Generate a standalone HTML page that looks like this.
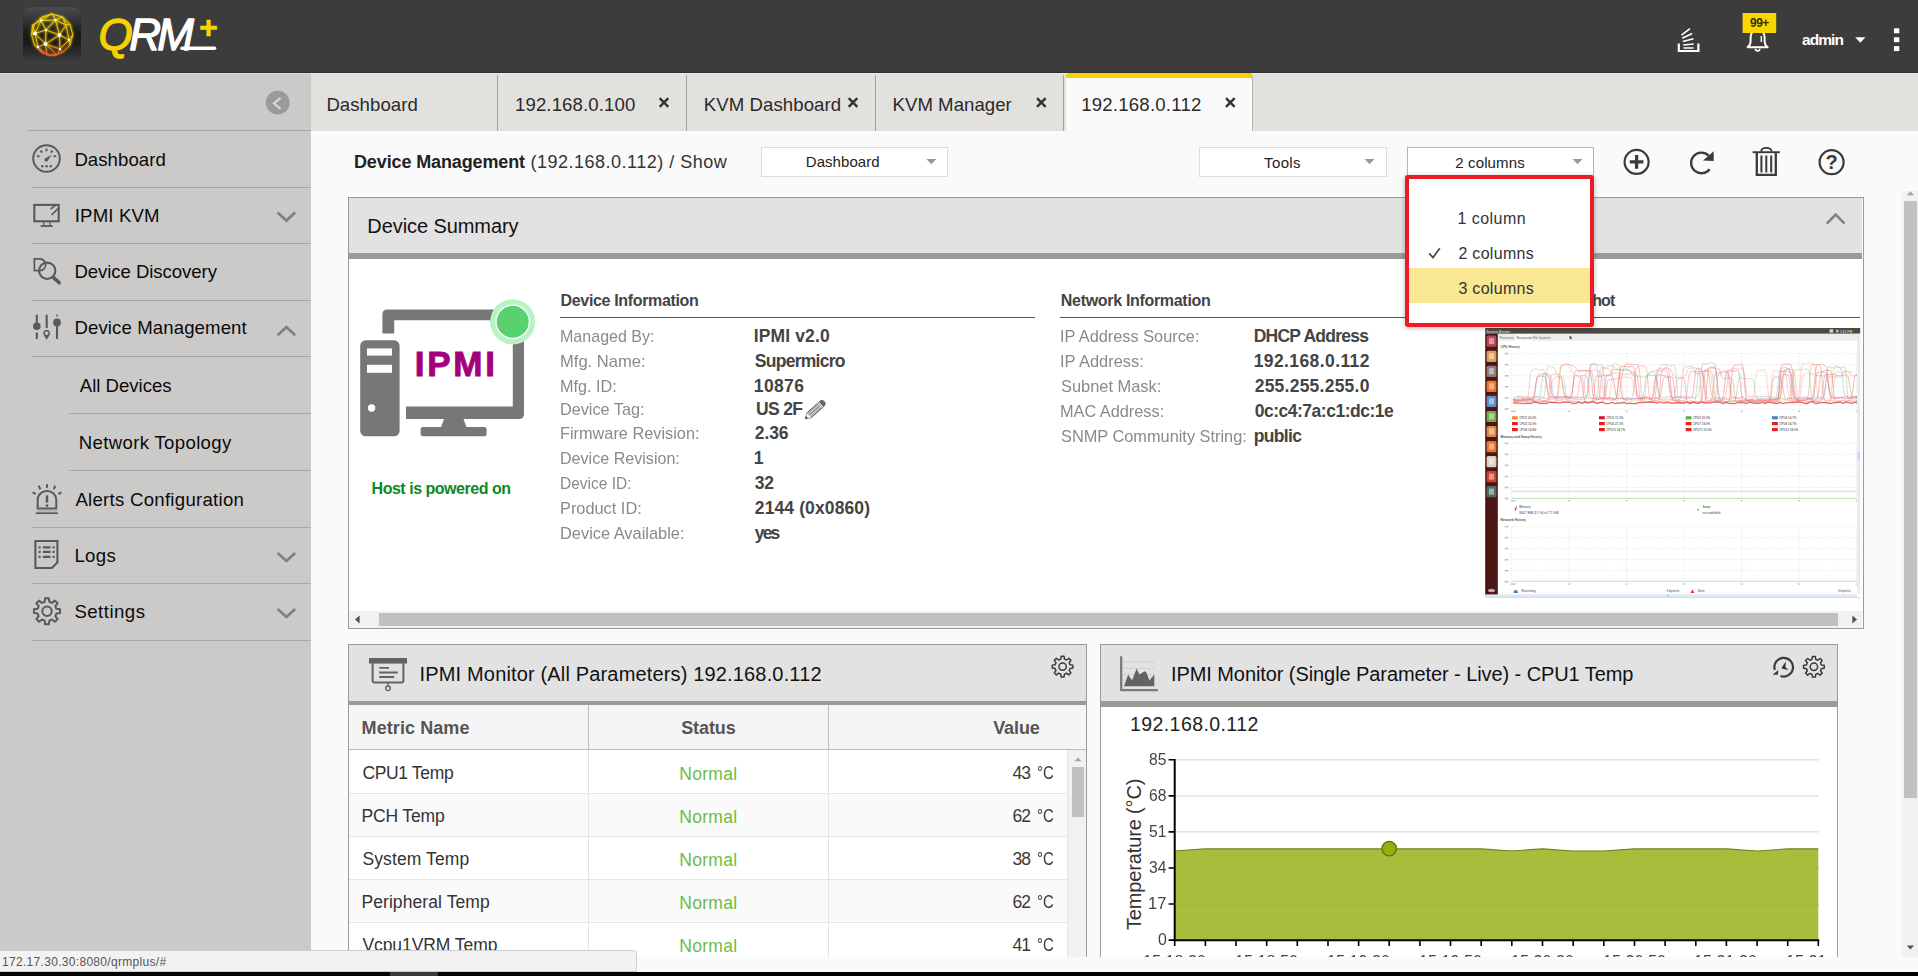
<!DOCTYPE html><html lang="en"><head><meta charset="utf-8"><title>QRM+</title><style>
*{box-sizing:border-box;margin:0;padding:0}
html,body{width:1918px;height:976px;overflow:hidden;background:#fafafa;font-family:"Liberation Sans",sans-serif;color:#111}
.a{position:absolute}
.t{position:absolute;white-space:nowrap;line-height:1}
#hdr{left:0;top:0;width:1918px;height:73px;background:#3c3c3c;border-bottom:1px solid #313131}
#side{left:0;top:73px;width:311px;height:884px;background:#cccac8;border-top:1px solid #d9d8d6}
#tabs{left:311px;top:73px;width:1607px;height:58px;background:#e3e1de;border-top:1px solid #ecebe8}
.sl{position:absolute;height:1px;background:#a9a7a5}
.tsep{position:absolute;top:75px;width:1px;height:56px;background:#a5a3a0}
#tabact{left:1066px;top:73px;width:187px;height:58px;background:#fafafa;border-top:5px solid #f7d100;border-radius:4px 4px 0 0;border-right:1px solid #b5b3b0}
.sel{position:absolute;height:30px;background:#fff;border:1px solid #dcdcdc}
.panel{position:absolute;border:1px solid #9a9a98;background:#fff}
.ph{position:absolute;left:1px;top:1px;right:1px;background:#e2e2e2}
.band{position:absolute;left:0;right:0;background:#9b9a96}
</style></head><body>
<div id="hdr" class="a"></div>
<svg class="a" style="left:0;top:0" width="1918" height="72" viewBox="0 0 1918 72"><defs><linearGradient id="gi" x1="0" y1="0" x2="0" y2="1"><stop offset="0" stop-color="#4b4c4e"/><stop offset="0.45" stop-color="#1c1c1c"/><stop offset="0.62" stop-color="#1a1a1a"/><stop offset="1" stop-color="#3d3f41"/></linearGradient><linearGradient id="gy" x1="0" y1="13" x2="0" y2="56" gradientUnits="userSpaceOnUse"><stop offset="0" stop-color="#ffe100"/><stop offset="0.7" stop-color="#f5c400"/><stop offset="0.88" stop-color="#f08020"/><stop offset="1" stop-color="#ee5a24"/></linearGradient><filter id="gl" x="-20%" y="-20%" width="140%" height="140%"><feGaussianBlur stdDeviation="0.9"/></filter></defs><rect x="23" y="7" width="58" height="57" rx="9" fill="url(#gi)"/><path d="M52.2 14.2 L62.5 17.0 L70.0 24.5 L72.8 34.8 L70.0 45.1 L62.5 52.6 L52.2 55.4 L41.9 52.6 L34.4 45.1 L31.6 34.8 L34.4 24.5 L41.9 17.0 Z M41 20.5 L55.5 20 M41 20.5 L46 30 M55.5 20 L46 30 M41 20.5 L35 33.5 M46 30 L35 33.5 M55.5 20 L59.5 35 M46 30 L59.5 35 M59.5 35 L69 40 M46 30 L45.5 44 M35 33.5 L45.5 44 M59.5 35 L45.5 44 M59.5 35 L60 49 M45.5 44 L60 49 M69 40 L60 49 M35 33.5 L38 47 M45.5 44 L38 47 M52 13.5 L41 20.5 M52 13.5 L55.5 20 M66 25 L55.5 20 M66 25 L59.5 35 M66 25 L69 40 M32.5 25 L41 20.5 M32.5 25 L35 33.5 M45.5 44 L47 55 M38 47 L47 55 M60 49 L57 55 M45.5 44 L57 55 M47 55 L57 55 M52 13.5 L52.2 14.2 M66 25 L70.0 24.5 M69 40 L70.0 45.1 M60 49 L62.5 52.6 M57 55 L52.2 55.4 M47 55 L52.2 55.4 M38 47 L34.4 45.1 M35 33.5 L31.6 34.8 M32.5 25 L34.4 24.5 M41 20.5 L41.9 17.0 M55.5 20 L62.5 17.0 M66 25 L62.5 17.0 M69 40 L72.8 34.8 M38 47 L41.9 52.6 M32.5 25 L31.6 34.8" fill="none" stroke="url(#gy)" stroke-width="2.2" opacity="0.55" filter="url(#gl)"/><path d="M52.2 14.2 L62.5 17.0 L70.0 24.5 L72.8 34.8 L70.0 45.1 L62.5 52.6 L52.2 55.4 L41.9 52.6 L34.4 45.1 L31.6 34.8 L34.4 24.5 L41.9 17.0 Z M41 20.5 L55.5 20 M41 20.5 L46 30 M55.5 20 L46 30 M41 20.5 L35 33.5 M46 30 L35 33.5 M55.5 20 L59.5 35 M46 30 L59.5 35 M59.5 35 L69 40 M46 30 L45.5 44 M35 33.5 L45.5 44 M59.5 35 L45.5 44 M59.5 35 L60 49 M45.5 44 L60 49 M69 40 L60 49 M35 33.5 L38 47 M45.5 44 L38 47 M52 13.5 L41 20.5 M52 13.5 L55.5 20 M66 25 L55.5 20 M66 25 L59.5 35 M66 25 L69 40 M32.5 25 L41 20.5 M32.5 25 L35 33.5 M45.5 44 L47 55 M38 47 L47 55 M60 49 L57 55 M45.5 44 L57 55 M47 55 L57 55 M52 13.5 L52.2 14.2 M66 25 L70.0 24.5 M69 40 L70.0 45.1 M60 49 L62.5 52.6 M57 55 L52.2 55.4 M47 55 L52.2 55.4 M38 47 L34.4 45.1 M35 33.5 L31.6 34.8 M32.5 25 L34.4 24.5 M41 20.5 L41.9 17.0 M55.5 20 L62.5 17.0 M66 25 L62.5 17.0 M69 40 L72.8 34.8 M38 47 L41.9 52.6 M32.5 25 L31.6 34.8" fill="none" stroke="url(#gy)" stroke-width="0.9"/><circle cx="41" cy="20.5" r="1.2" fill="#fff"/><circle cx="55.5" cy="20" r="1.2" fill="#fff"/><circle cx="46" cy="30" r="1.2" fill="#fff"/><circle cx="35" cy="33.5" r="2.0" fill="#fff"/><circle cx="59.5" cy="35" r="2.0" fill="#fff"/><circle cx="69" cy="40" r="1.2" fill="#fff"/><circle cx="45.5" cy="44" r="2.0" fill="#fff"/><circle cx="60" cy="49" r="1.2" fill="#fff"/><circle cx="38" cy="47" r="1.2" fill="#fff"/><text x="98.5" y="49.6" font-family="Liberation Sans, sans-serif" font-style="italic" font-size="44" letter-spacing="-3.6" fill="#f7d100" stroke="#f7d100" stroke-width="1.3" stroke-linejoin="round">Q<tspan fill="#fff" stroke="#fff">RM</tspan></text><text x="198.6" y="37.6" font-family="Liberation Sans, sans-serif" font-weight="700" font-style="italic" font-size="32" fill="#f7d100" stroke="#f7d100" stroke-width="0.6" stroke-linejoin="round">+</text><path d="M182 48.3 H214.5" stroke="#fff" stroke-width="3.6" stroke-linecap="round"/><g stroke="#fff" fill="none" stroke-width="1.6"><path d="M1678.8 43.5 V51 H1698.4 V43.5" stroke-width="2.2"/><path d="M1683.5 48 H1693.5 M1683.3 45 L1693.7 44 M1682.8 41.6 L1693.5 38.8 M1682.3 38.2 L1692.2 33.6 M1681.5 35.2 L1690 28.6"/></g><path d="M1747.6 47.2 H1767.6 C1765.2 45.6 1764.6 43.6 1764.6 40.5 V37.5 C1764.6 32.8 1761.6 30 1757.6 30 C1753.6 30 1750.6 32.8 1750.6 37.5 V40.5 C1750.6 43.6 1750 45.6 1747.6 47.2 Z" fill="none" stroke="#fff" stroke-width="2" stroke-linejoin="round"/><path d="M1755.4 48.8 a2.2 2.2 0 0 0 4.4 0" fill="none" stroke="#fff" stroke-width="1.6"/><path d="M1761.3 36 V42" stroke="#fff" stroke-width="1.4"/><rect x="1742.6" y="13" width="33.6" height="20" fill="#f9d600"/><path d="M1855.2 37.2 H1865.4 L1860.3 42.8 Z" fill="#fff"/><rect x="1893.9" y="28.3" width="5.4" height="5" fill="#fff"/><rect x="1893.9" y="37.2" width="5.4" height="5" fill="#fff"/><rect x="1893.9" y="46.1" width="5.4" height="5" fill="#fff"/></svg>
<div id="side" class="a"></div>
<div id="tabs" class="a"></div>
<div class="sl" style="left:27px;top:130px;width:284px"></div>
<div class="sl" style="left:32px;top:187px;width:279px"></div>
<div class="sl" style="left:32px;top:243px;width:279px"></div>
<div class="sl" style="left:32px;top:300px;width:279px"></div>
<div class="sl" style="left:32px;top:356px;width:279px"></div>
<div class="sl" style="left:69px;top:413px;width:242px"></div>
<div class="sl" style="left:69px;top:470px;width:242px"></div>
<div class="sl" style="left:32px;top:527px;width:279px"></div>
<div class="sl" style="left:32px;top:583px;width:279px"></div>
<div class="sl" style="left:32px;top:640px;width:279px"></div>
<svg class="a" style="left:0;top:72px" width="311" height="600" viewBox="0 72 311 600"><circle cx="277.7" cy="102.7" r="11.9" fill="#9b9a98"/><path d="M280.5 98 L273.9 103.3 L280.5 108.8" fill="none" stroke="#d8d7d5" stroke-width="2.3"/><g fill="none" stroke="#5b5957" stroke-width="2"><circle cx="46.5" cy="158.5" r="13.3"/><path d="M39.5 156.6 L36.9 155.9 M42.2 152.7 L40.5 150.6 M46.5 151.3 L46.5 148.6 M50.8 152.7 L52.5 150.6 M53.5 156.6 L56.1 155.9" stroke-width="1.9"/></g><path d="M44.9 158.7 L51.9 154.6 L47.3 161.2 Z" fill="#5b5957"/><circle cx="46.1" cy="159.9" r="1.7" fill="#5b5957"/><circle cx="42.3" cy="166.3" r="1.25" fill="#5b5957"/><circle cx="46.5" cy="166.3" r="1.25" fill="#5b5957"/><circle cx="50.7" cy="166.3" r="1.25" fill="#5b5957"/><g fill="none" stroke="#5b5957" stroke-width="2.1"><rect x="34.3" y="204.9" width="24.4" height="16.4"/><path d="M50.6 209.2 L56.2 204.6 M51.6 215 L58.6 208" stroke-width="1.7"/><path d="M43.7 221.6 V225.6 M49.8 221.6 V225.6" stroke-width="1.3"/><path d="M40.7 226 H52.7" stroke-width="1.8"/></g><g fill="none" stroke="#5b5957" stroke-width="2.1"><path d="M34.4 258.9 H39.6 C43.9 258.9 45.7 262.1 45.7 264.6 C45.7 267.9 43.4 270.6 39.6 270.6 H34.4 Z" stroke-width="1.7"/><circle cx="47.2" cy="270.8" r="8.2"/><path d="M53.6 277.6 L59.2 282.8" stroke-width="3.5" stroke-linecap="round"/></g><g stroke="#5b5957" stroke-width="2.1" fill="none"><path d="M36.8 314.8 V327 M36.8 332.6 V339 M46.7 314.8 V328 M57 325 V339"/><path d="M46.7 330.6 a2.6 2.6 0 1 1 -0.01 0 Z M44.9 335.4 L46.7 338.2 L48.5 335.4" stroke-width="1.6"/></g><circle cx="36.8" cy="326.2" r="3.8" fill="#5b5957"/><circle cx="57" cy="322.4" r="3.9" fill="#5b5957"/><circle cx="57" cy="315.4" r="1" fill="#5b5957"/><g fill="none" stroke="#5b5957" stroke-width="2"><path d="M37.7 508.6 V499.9 C37.7 494.6 41.7 490.9 47 490.9 C52.3 490.9 56.3 494.6 56.3 499.9 V508.6 Z"/><path d="M35.8 513.2 H58" stroke-width="1.7"/><path d="M37 510.9 H57" stroke="#a9a7a4" stroke-width="1.2"/><path d="M47 495.3 V502.6" stroke-width="2.4"/><path d="M47 484.3 V487.8 M38.6 485.8 L40.4 489.2 M55.4 485.8 L53.6 489.2 M32.6 492.4 L35.6 494 M61.4 492.4 L58.4 494" stroke-width="2"/></g><circle cx="47" cy="505.6" r="1.35" fill="#5b5957"/><g fill="none" stroke="#5b5957" stroke-width="2.1"><path d="M35.4 541 H57.4 V562.4 L52 568 H35.4 Z"/><path d="M38.6 547.3 H40.6 M42.9 547.3 H50.5 M52.6 547.3 H54.6 M38.6 551.9 H40.6 M42.9 551.9 H50.5 M52.6 551.9 H54.6 M38.6 556.8 H40.6 M42.9 556.8 H50.5 M52.6 556.8 H54.6" stroke-width="2.3"/></g><path d="M56.41 608.86 L60.07 609.34 L60.07 613.06 L56.41 613.54 L55.31 616.20 L57.56 619.13 L54.93 621.76 L52.00 619.51 L49.34 620.61 L48.86 624.27 L45.14 624.27 L44.66 620.61 L42.00 619.51 L39.07 621.76 L36.44 619.13 L38.69 616.20 L37.59 613.54 L33.93 613.06 L33.93 609.34 L37.59 608.86 L38.69 606.20 L36.44 603.27 L39.07 600.64 L42.00 602.89 L44.66 601.79 L45.14 598.13 L48.86 598.13 L49.34 601.79 L52.00 602.89 L54.93 600.64 L57.56 603.27 L55.31 606.20 Z" fill="none" stroke="#5b5957" stroke-width="2.0" stroke-linejoin="round"/><circle cx="47" cy="611.2" r="4.7" fill="none" stroke="#5b5957" stroke-width="2.0"/><path d="M277.6 212.6 L286.4 220.6 L295.2 212.6" fill="none" stroke="#827e7b" stroke-width="2.7" stroke-linecap="butt" stroke-linejoin="miter"/><path d="M277.6 335.2 L286.4 327 L295.2 335.2" fill="none" stroke="#827e7b" stroke-width="2.7" stroke-linecap="butt" stroke-linejoin="miter"/><path d="M277.6 553 L286.4 561 L295.2 553" fill="none" stroke="#827e7b" stroke-width="2.7" stroke-linecap="butt" stroke-linejoin="miter"/><path d="M277.6 609 L286.4 617 L295.2 609" fill="none" stroke="#827e7b" stroke-width="2.7" stroke-linecap="butt" stroke-linejoin="miter"/></svg>
<div class="tsep" style="left:497px"></div>
<div class="tsep" style="left:686px"></div>
<div class="tsep" style="left:875px"></div>
<div class="tsep" style="left:1063px"></div>
<div id="tabact" class="a"></div>
<svg class="a" style="left:640px;top:90px" width="620" height="26" viewBox="640 90 620 26"><path d="M659.7 98.2 L668.3 106.8 M668.3 98.2 L659.7 106.8" stroke="#333" stroke-width="2.4" fill="none"/><path d="M848.7 98.2 L857.3 106.8 M857.3 98.2 L848.7 106.8" stroke="#333" stroke-width="2.4" fill="none"/><path d="M1037.0 98.2 L1045.6 106.8 M1045.6 98.2 L1037.0 106.8" stroke="#333" stroke-width="2.4" fill="none"/><path d="M1226.0 98.2 L1234.6 106.8 M1234.6 98.2 L1226.0 106.8" stroke="#333" stroke-width="2.4" fill="none"/></svg>
<div class="sel" style="left:761px;top:147px;width:187px"></div>
<div class="sel" style="left:1199px;top:147px;width:188px"></div>
<div class="sel" style="left:1407px;top:147px;width:187px;border-color:#b4b4b4"></div>
<svg class="a" style="left:740px;top:140px" width="1130" height="50" viewBox="740 140 1130 50"><path d="M926.3 158.9 H936.3 L931.3 164.29999999999998 Z" fill="#9a9a9a"/><path d="M1364.5 158.9 H1374.5 L1369.5 164.29999999999998 Z" fill="#9a9a9a"/><path d="M1572.5 158.9 H1582.5 L1577.5 164.29999999999998 Z" fill="#9a9a9a"/><circle cx="1636.6" cy="161.9" r="12" fill="none" stroke="#3a3a38" stroke-width="2.2"/><path d="M1629.8 161.9 H1643.4 M1636.6 155.1 V168.7" stroke="#3a3a38" stroke-width="3.3"/><path d="M1709.6 169.2 A10.3 10.3 0 1 1 1708.6 155.6" fill="none" stroke="#3a3a38" stroke-width="2.3"/><path d="M1703 160.6 L1713.7 151.3 V161 Z" fill="#3a3a38"/><g fill="none" stroke="#3a3a38"><path d="M1752.6 152.2 H1779.8" stroke-width="1.9"/><path d="M1761 151.6 C1761.4 146.6 1771.2 146.6 1771.6 151.6" stroke-width="1.7"/><path d="M1756.8 152.6 V174.9 H1775.8 V152.6" stroke-width="2.3"/><path d="M1761.4 155.5 V172.5 M1766.3 155.5 V172.5 M1771.2 155.5 V172.5" stroke-width="2"/></g><circle cx="1831.6" cy="162.2" r="12" fill="none" stroke="#3a3a38" stroke-width="2.2"/><text x="1831.6" y="169" text-anchor="middle" font-family="Liberation Sans, sans-serif" font-weight="700" font-size="20" fill="#3a3a38">?</text></svg>
<div class="a" style="left:311px;top:131px;width:1607px;height:826px;overflow:hidden"><div class="a" style="left:-311px;top:-131px;width:1918px;height:976px">
<div class="panel" style="left:348px;top:197px;width:1516px;height:432px"><div class="ph" style="height:55px;top:0;left:0"></div><div class="band" style="top:55px;height:6px;left:0;right:1px"></div><div class="a" style="left:0;right:1px;bottom:0;height:17px;background:#f1f1f1"></div><div class="a" style="left:30px;bottom:2px;height:13px;width:1459px;background:#c1c1c1"></div></div>
<div class="a" style="left:560px;top:317px;width:475px;height:1px;background:#555"></div>
<div class="a" style="left:1060px;top:317px;width:400px;height:1px;background:#555"></div>
<div class="a" style="left:1485px;top:317px;width:375px;height:1px;background:#555"></div>
<svg class="a" style="left:348px;top:197px" width="1516" height="432" viewBox="348 197 1516 432"><path d="M1826.8 223.6 L1835.6999999999998 214.6 L1844.6 223.6" fill="none" stroke="#85817e" stroke-width="2.6" stroke-linecap="butt" stroke-linejoin="miter"/><path d="M359.6 615.5 V623.5 L355.0 619.5 Z" fill="#505050"/><path d="M1852.4 615.5 V623.5 L1857.0 619.5 Z" fill="#505050"/><path d="M382.4 333.5 V314.5 Q382.4 309.5 387.4 309.5 H519 Q524 309.5 524 314.5 V414 Q524 419 519 419 H406 V406.6 H512.8 V320.2 H394.2 V333.5 Z" fill="#777"/><path d="M444 419 H463.5 L466.5 427.3 H441 Z" fill="#777"/><rect x="420.6" y="427" width="66" height="9.2" rx="2.5" fill="#777"/><rect x="360.2" y="340.3" width="39.4" height="96" rx="5.5" fill="#777"/><rect x="367" y="348.4" width="25" height="7.2" fill="#fff"/><rect x="367" y="364.8" width="25" height="8" fill="#fff"/><circle cx="371.6" cy="408" r="3.7" fill="#fff"/><circle cx="512.7" cy="321.8" r="22.6" fill="#b9f3c4"/><circle cx="512.7" cy="321.8" r="17.4" fill="#fff"/><circle cx="512.7" cy="321.8" r="16" fill="#58d16e"/><g transform="translate(805.2,418.8) rotate(-42)"><path d="M0 0 L5.4 -3.3 H22.4 Q25.8 -3.3 25.8 0 Q25.8 3.3 22.4 3.3 H5.4 Z" fill="#a6a6a6" stroke="#6a6a6a" stroke-width="0.9" stroke-linejoin="round"/><path d="M5.4 -3.1 L2.2 -1.3 L2.2 1.3 L5.4 3.1 Z" fill="#f4f4f4"/><path d="M0 0 L2.4 -1.4 V1.4 Z" fill="#555"/><path d="M5.6 -1.1 H19 M5.6 1.1 H19" stroke="#e2e2e2" stroke-width="0.8"/><path d="M5.6 0 H19" stroke="#777" stroke-width="0.7"/><path d="M19.6 -3.2 V3.2 M21 -3.2 V3.2" stroke="#f0f0f0" stroke-width="0.7"/><path d="M21.8 -3.1 H22.6 Q25.4 -3 25.4 0 Q25.4 3 22.6 3.1 H21.8 Z" fill="#676767"/></g></svg>
<svg class="a" style="left:1485px;top:327px" width="377" height="272" viewBox="1485 327 377 272"><rect x="1485.2" y="328" width="375.0" height="269.79999999999995" fill="#fff"/><rect x="1485.2" y="328" width="375.0" height="5.8" fill="#4b4a45"/><rect x="1497.8" y="333.8" width="362.4000000000001" height="7" fill="#efedeb"/><rect x="1485.2" y="333.8" width="12.6" height="261.99999999999994" fill="#4a1512"/><rect x="1486.6" y="335.6" width="9.8" height="11.2" rx="1.5" fill="#b5475a"/><rect x="1489" y="338.1" width="5" height="6" fill="#fff" opacity="0.45"/><rect x="1486.6" y="350.7" width="9.8" height="11.2" rx="1.5" fill="#d9a05a"/><rect x="1489" y="353.2" width="5" height="6" fill="#fff" opacity="0.45"/><rect x="1486.6" y="365.7" width="9.8" height="11.2" rx="1.5" fill="#8a7f78"/><rect x="1489" y="368.2" width="5" height="6" fill="#fff" opacity="0.45"/><rect x="1486.6" y="380.8" width="9.8" height="11.2" rx="1.5" fill="#e8792a"/><rect x="1489" y="383.2" width="5" height="6" fill="#fff" opacity="0.45"/><rect x="1486.6" y="395.8" width="9.8" height="11.2" rx="1.5" fill="#5b8fc7"/><rect x="1489" y="398.3" width="5" height="6" fill="#fff" opacity="0.45"/><rect x="1486.6" y="410.9" width="9.8" height="11.2" rx="1.5" fill="#6fb04e"/><rect x="1489" y="413.4" width="5" height="6" fill="#fff" opacity="0.45"/><rect x="1486.6" y="425.9" width="9.8" height="11.2" rx="1.5" fill="#d98a4a"/><rect x="1489" y="428.4" width="5" height="6" fill="#fff" opacity="0.45"/><rect x="1486.6" y="441.0" width="9.8" height="11.2" rx="1.5" fill="#e8762a"/><rect x="1489" y="443.5" width="5" height="6" fill="#fff" opacity="0.45"/><rect x="1486.6" y="456.0" width="9.8" height="11.2" rx="1.5" fill="#d9d2c4"/><rect x="1489" y="458.5" width="5" height="6" fill="#fff" opacity="0.45"/><rect x="1486.6" y="471.1" width="9.8" height="11.2" rx="1.5" fill="#c9452f"/><rect x="1489" y="473.6" width="5" height="6" fill="#fff" opacity="0.45"/><rect x="1486.6" y="486.1" width="9.8" height="11.2" rx="1.5" fill="#4d6e68"/><rect x="1489" y="488.6" width="5" height="6" fill="#fff" opacity="0.45"/><ellipse cx="1491.5" cy="590.5" rx="3.6" ry="1.7" fill="#b9a9a6"/><text x="1486.4" y="332.6" font-family="Liberation Sans, sans-serif" font-size="3.2" font-weight="700" fill="#cfcac0">System Monitor</text><text x="1840" y="332.6" font-family="Liberation Sans, sans-serif" font-size="3.2" font-weight="700" fill="#cfcac0">1:21 PM</text><rect x="1829.5" y="329.3" width="3.6" height="3.4" fill="#d8d4cc"/><rect x="1836" y="329.8" width="2.6" height="2.6" fill="#bdb9b0"/><text x="1499.5" y="339.2" font-family="Liberation Sans, sans-serif" font-size="3.1" font-weight="400" fill="#666">Processes</text><text x="1516.5" y="339.2" font-family="Liberation Sans, sans-serif" font-size="3.1" font-weight="400" fill="#444">Resources</text><text x="1533" y="339.2" font-family="Liberation Sans, sans-serif" font-size="3.1" font-weight="400" fill="#666">File Systems</text><rect x="1514.6" y="334.4" width="16" height="6.4" fill="#fafafa"/><text x="1516.5" y="339.2" font-family="Liberation Sans, sans-serif" font-size="3.1" font-weight="400" fill="#444">Resources</text><path d="M1569.6 335.6 l0 3.4 l0.9 -0.8 l0.7 1.5 l0.6 -0.3 l-0.7 -1.4 l1.1 0 z" fill="#333"/><text x="1500.5" y="348" font-family="Liberation Sans, sans-serif" font-size="3.3" font-weight="700" fill="#555">CPU History</text><text x="1500.5" y="438" font-family="Liberation Sans, sans-serif" font-size="3.3" font-weight="700" fill="#555">Memory and Swap History</text><text x="1500.5" y="521.4" font-family="Liberation Sans, sans-serif" font-size="3.3" font-weight="700" fill="#555">Network History</text><path d="M1511.6 353.6 H1856.5 M1511.6 364.7 H1856.5 M1511.6 375.8 H1856.5 M1511.6 386.8 H1856.5 M1511.6 397.9 H1856.5 M1511.6 409.0 H1856.5 M1511.6 353.6 V409 M1569.1 353.6 V409 M1626.6 353.6 V409 M1684.1 353.6 V409 M1741.6 353.6 V409 M1799.1 353.6 V409 M1856.6 353.6 V409" stroke="#d9d9d9" stroke-width="0.5" stroke-dasharray="1 0.8" fill="none"/><path d="M1511.6 443.4 H1856.5 M1511.6 454.4 H1856.5 M1511.6 465.4 H1856.5 M1511.6 476.5 H1856.5 M1511.6 487.5 H1856.5 M1511.6 498.5 H1856.5 M1511.6 443.4 V498.5 M1569.1 443.4 V498.5 M1626.6 443.4 V498.5 M1684.1 443.4 V498.5 M1741.6 443.4 V498.5 M1799.1 443.4 V498.5 M1856.6 443.4 V498.5" stroke="#d9d9d9" stroke-width="0.5" stroke-dasharray="1 0.8" fill="none"/><path d="M1511.6 526.6 H1856.5 M1511.6 537.6 H1856.5 M1511.6 548.6 H1856.5 M1511.6 559.7 H1856.5 M1511.6 570.7 H1856.5 M1511.6 581.7 H1856.5 M1511.6 526.6 V581.7 M1569.1 526.6 V581.7 M1626.6 526.6 V581.7 M1684.1 526.6 V581.7 M1741.6 526.6 V581.7 M1799.1 526.6 V581.7 M1856.6 526.6 V581.7" stroke="#d9d9d9" stroke-width="0.5" stroke-dasharray="1 0.8" fill="none"/><rect x="1504.6" y="352.8" width="4" height="1.6" fill="#c4c4c4"/><rect x="1504.6" y="363.9" width="4" height="1.6" fill="#c4c4c4"/><rect x="1504.6" y="375.0" width="4" height="1.6" fill="#c4c4c4"/><rect x="1504.6" y="386.0" width="4" height="1.6" fill="#c4c4c4"/><rect x="1504.6" y="397.1" width="4" height="1.6" fill="#c4c4c4"/><rect x="1504.6" y="408.2" width="4" height="1.6" fill="#c4c4c4"/><rect x="1510.6" y="410.6" width="5" height="1.5" fill="#c9c9c9"/><rect x="1568.1" y="410.6" width="2" height="1.5" fill="#c9c9c9"/><rect x="1625.6" y="410.6" width="2" height="1.5" fill="#c9c9c9"/><rect x="1683.1" y="410.6" width="2" height="1.5" fill="#c9c9c9"/><rect x="1740.6" y="410.6" width="2" height="1.5" fill="#c9c9c9"/><rect x="1798.1" y="410.6" width="2" height="1.5" fill="#c9c9c9"/><rect x="1855.6" y="410.6" width="2" height="1.5" fill="#c9c9c9"/><rect x="1504.6" y="442.6" width="4" height="1.6" fill="#c4c4c4"/><rect x="1504.6" y="453.6" width="4" height="1.6" fill="#c4c4c4"/><rect x="1504.6" y="464.6" width="4" height="1.6" fill="#c4c4c4"/><rect x="1504.6" y="475.7" width="4" height="1.6" fill="#c4c4c4"/><rect x="1504.6" y="486.7" width="4" height="1.6" fill="#c4c4c4"/><rect x="1504.6" y="497.7" width="4" height="1.6" fill="#c4c4c4"/><rect x="1510.6" y="500.1" width="5" height="1.5" fill="#c9c9c9"/><rect x="1568.1" y="500.1" width="2" height="1.5" fill="#c9c9c9"/><rect x="1625.6" y="500.1" width="2" height="1.5" fill="#c9c9c9"/><rect x="1683.1" y="500.1" width="2" height="1.5" fill="#c9c9c9"/><rect x="1740.6" y="500.1" width="2" height="1.5" fill="#c9c9c9"/><rect x="1798.1" y="500.1" width="2" height="1.5" fill="#c9c9c9"/><rect x="1855.6" y="500.1" width="2" height="1.5" fill="#c9c9c9"/><rect x="1504.6" y="525.8" width="4" height="1.6" fill="#c4c4c4"/><rect x="1504.6" y="536.8" width="4" height="1.6" fill="#c4c4c4"/><rect x="1504.6" y="547.8" width="4" height="1.6" fill="#c4c4c4"/><rect x="1504.6" y="558.9" width="4" height="1.6" fill="#c4c4c4"/><rect x="1504.6" y="569.9" width="4" height="1.6" fill="#c4c4c4"/><rect x="1504.6" y="580.9" width="4" height="1.6" fill="#c4c4c4"/><rect x="1510.6" y="583.3" width="5" height="1.5" fill="#c9c9c9"/><rect x="1568.1" y="583.3" width="2" height="1.5" fill="#c9c9c9"/><rect x="1625.6" y="583.3" width="2" height="1.5" fill="#c9c9c9"/><rect x="1683.1" y="583.3" width="2" height="1.5" fill="#c9c9c9"/><rect x="1740.6" y="583.3" width="2" height="1.5" fill="#c9c9c9"/><rect x="1798.1" y="583.3" width="2" height="1.5" fill="#c9c9c9"/><rect x="1855.6" y="583.3" width="2" height="1.5" fill="#c9c9c9"/><path d="M1513.0 399.6 C1516.7 399.6 1516.7 402.1 1520.4 402.1 C1522.0 402.1 1522.0 401.7 1523.6 401.7 C1525.2 401.7 1525.2 402.0 1526.8 402.0 C1528.4 402.0 1528.4 401.2 1530.0 401.2 C1531.6 401.2 1531.6 401.3 1533.3 401.3 C1534.9 401.3 1534.9 401.8 1536.5 401.8 C1538.1 401.8 1538.1 401.3 1539.7 401.3 C1541.3 401.3 1541.3 401.8 1542.9 401.8 C1544.5 401.8 1544.5 400.9 1546.1 400.9 C1547.7 400.9 1547.7 401.1 1549.3 401.1 C1550.9 401.1 1550.9 402.3 1552.5 402.3 C1554.1 402.3 1554.1 401.7 1555.7 401.7 C1558.5 401.7 1558.5 365.0 1561.3 365.0 C1563.0 365.0 1563.0 364.6 1564.8 364.6 C1566.6 364.6 1566.6 364.7 1568.3 364.7 C1571.3 364.7 1571.3 375.0 1574.3 375.0 C1576.1 375.0 1576.1 375.4 1577.9 375.4 C1579.6 375.4 1579.6 375.6 1581.4 375.6 C1584.2 375.6 1584.2 398.3 1587.0 398.3 C1588.8 398.3 1588.8 398.0 1590.6 398.0 C1592.4 398.0 1592.4 398.4 1594.2 398.4 C1596.0 398.4 1596.0 397.5 1597.8 397.5 C1599.6 397.5 1599.6 397.4 1601.4 397.4 C1603.2 397.4 1603.2 397.7 1605.0 397.7 C1606.8 397.7 1606.8 398.7 1608.6 398.7 C1611.3 398.7 1611.3 363.7 1614.0 363.7 C1616.0 363.7 1616.0 364.2 1618.0 364.2 C1621.4 364.2 1621.4 400.3 1624.8 400.3 C1626.6 400.3 1626.6 401.2 1628.4 401.2 C1630.2 401.2 1630.2 400.8 1632.1 400.8 C1633.9 400.8 1633.9 400.2 1635.7 400.2 C1637.5 400.2 1637.5 399.9 1639.3 399.9 C1641.2 399.9 1641.2 401.2 1643.0 401.2 C1646.1 401.2 1646.1 372.8 1649.2 372.8 C1651.5 372.8 1651.5 372.1 1653.9 372.1 C1657.7 372.1 1657.7 401.9 1661.5 401.9 C1663.2 401.9 1663.2 401.1 1664.9 401.1 C1666.7 401.1 1666.7 402.7 1668.4 402.7 C1670.1 402.7 1670.1 402.4 1671.8 402.4 C1673.5 402.4 1673.5 403.0 1675.2 403.0 C1677.0 403.0 1677.0 402.7 1678.7 402.7 C1680.4 402.7 1680.4 403.0 1682.1 403.0 C1683.8 403.0 1683.8 402.1 1685.5 402.1 C1687.3 402.1 1687.3 403.0 1689.0 403.0 C1690.7 403.0 1690.7 402.6 1692.4 402.6 C1694.1 402.6 1694.1 401.8 1695.8 401.8 C1697.6 401.8 1697.6 403.0 1699.3 403.0 C1702.1 403.0 1702.1 370.1 1704.8 370.1 C1706.8 370.1 1706.8 371.6 1708.7 371.6 C1712.1 371.6 1712.1 398.6 1715.5 398.6 C1717.2 398.6 1717.2 399.3 1718.8 399.3 C1720.5 399.3 1720.5 399.9 1722.2 399.9 C1723.8 399.9 1723.8 398.7 1725.5 398.7 C1728.3 398.7 1728.3 401.1 1731.0 401.1 C1732.8 401.1 1732.8 401.0 1734.5 401.0 C1736.2 401.0 1736.2 401.1 1737.9 401.1 C1739.7 401.1 1739.7 400.7 1741.4 400.7 C1743.1 400.7 1743.1 400.2 1744.9 400.2 C1746.6 400.2 1746.6 400.7 1748.3 400.7 C1750.1 400.7 1750.1 401.0 1751.8 401.0 C1754.8 401.0 1754.8 370.4 1757.7 370.4 C1759.4 370.4 1759.4 370.0 1761.1 370.0 C1762.7 370.0 1762.7 369.9 1764.4 369.9 C1767.4 369.9 1767.4 400.5 1770.5 400.5 C1772.1 400.5 1772.1 401.1 1773.8 401.1 C1775.5 401.1 1775.5 399.9 1777.2 399.9 C1778.8 399.9 1778.8 401.3 1780.5 401.3 C1782.2 401.3 1782.2 399.6 1783.9 399.6 C1785.6 399.6 1785.6 400.5 1787.2 400.5 C1788.9 400.5 1788.9 400.5 1790.6 400.5 C1792.3 400.5 1792.3 399.9 1793.9 399.9 C1795.6 399.9 1795.6 400.5 1797.3 400.5 C1800.1 400.5 1800.1 363.3 1802.9 363.3 C1804.7 363.3 1804.7 364.1 1806.5 364.1 C1808.2 364.1 1808.2 362.8 1810.0 362.8 C1811.8 362.8 1811.8 364.3 1813.6 364.3 C1816.3 364.3 1816.3 399.5 1819.0 399.5 C1820.9 399.5 1820.9 398.9 1822.9 398.9 C1824.8 398.9 1824.8 400.1 1826.8 400.1 C1828.7 400.1 1828.7 399.7 1830.6 399.7 C1833.9 399.7 1833.9 371.3 1837.1 371.3 C1839.2 371.3 1839.2 372.5 1841.3 372.5 C1843.4 372.5 1843.4 370.8 1845.5 370.8 C1849.0 370.8 1849.0 375.9 1852.5 375.9 C1854.5 375.9 1854.5 375.8 1856.5 375.8 C1856.5 375.8 1856.5 375.1 1856.5 375.1" fill="none" stroke="#eda65c" stroke-width="0.5" opacity="0.8"/><path d="M1513.0 399.5 C1514.2 399.5 1514.2 399.9 1515.4 399.9 C1517.2 399.9 1517.2 400.7 1518.9 400.7 C1520.6 400.7 1520.6 400.0 1522.4 400.0 C1524.1 400.0 1524.1 400.2 1525.9 400.2 C1527.6 400.2 1527.6 399.6 1529.4 399.6 C1531.1 399.6 1531.1 399.6 1532.9 399.6 C1535.5 399.6 1535.5 376.7 1538.1 376.7 C1539.7 376.7 1539.7 375.9 1541.3 375.9 C1542.9 375.9 1542.9 376.6 1544.5 376.6 C1547.0 376.6 1547.0 396.8 1549.5 396.8 C1551.2 396.8 1551.2 398.0 1552.9 398.0 C1554.6 398.0 1554.6 396.7 1556.4 396.7 C1558.1 396.7 1558.1 398.2 1559.8 398.2 C1561.5 398.2 1561.5 397.5 1563.3 397.5 C1565.0 397.5 1565.0 396.3 1566.7 396.3 C1568.4 396.3 1568.4 397.9 1570.2 397.9 C1572.9 397.9 1572.9 375.7 1575.6 375.7 C1577.7 375.7 1577.7 377.0 1579.8 377.0 C1583.0 377.0 1583.0 402.8 1586.2 402.8 C1587.8 402.8 1587.8 402.2 1589.5 402.2 C1591.1 402.2 1591.1 401.3 1592.7 401.3 C1594.3 401.3 1594.3 402.9 1595.9 402.9 C1597.5 402.9 1597.5 402.8 1599.1 402.8 C1600.8 402.8 1600.8 401.3 1602.4 401.3 C1604.8 401.3 1604.8 374.8 1607.2 374.8 C1609.3 374.8 1609.3 375.3 1611.4 375.3 C1614.7 375.3 1614.7 399.0 1618.0 399.0 C1619.7 399.0 1619.7 398.4 1621.3 398.4 C1623.0 398.4 1623.0 398.1 1624.6 398.1 C1626.3 398.1 1626.3 398.0 1627.9 398.0 C1629.6 398.0 1629.6 399.5 1631.2 399.5 C1632.9 399.5 1632.9 398.2 1634.5 398.2 C1636.2 398.2 1636.2 398.6 1637.8 398.6 C1639.5 398.6 1639.5 398.4 1641.1 398.4 C1642.8 398.4 1642.8 399.0 1644.4 399.0 C1646.1 399.0 1646.1 398.8 1647.7 398.8 C1649.4 398.8 1649.4 399.5 1651.0 399.5 C1653.8 399.5 1653.8 375.9 1656.5 375.9 C1658.2 375.9 1658.2 374.7 1659.9 374.7 C1661.6 374.7 1661.6 375.8 1663.3 375.8 C1665.0 375.8 1665.0 376.0 1666.7 376.0 C1669.8 376.0 1669.8 398.4 1673.0 398.4 C1674.9 398.4 1674.9 396.8 1676.7 396.8 C1678.6 396.8 1678.6 397.5 1680.4 397.5 C1682.2 397.5 1682.2 398.2 1684.1 398.2 C1685.9 398.2 1685.9 398.3 1687.8 398.3 C1689.6 398.3 1689.6 397.8 1691.5 397.8 C1694.3 397.8 1694.3 368.2 1697.1 368.2 C1699.0 368.2 1699.0 369.0 1700.9 369.0 C1704.0 369.0 1704.0 400.8 1707.1 400.8 C1708.9 400.8 1708.9 400.4 1710.7 400.4 C1712.4 400.4 1712.4 399.9 1714.2 399.9 C1716.0 399.9 1716.0 401.2 1717.8 401.2 C1719.6 401.2 1719.6 400.7 1721.4 400.7 C1724.6 400.7 1724.6 370.3 1727.9 370.3 C1729.6 370.3 1729.6 371.0 1731.2 371.0 C1732.9 371.0 1732.9 371.1 1734.5 371.1 C1736.2 371.1 1736.2 370.5 1737.8 370.5 C1740.6 370.5 1740.6 399.8 1743.3 399.8 C1745.0 399.8 1745.0 399.2 1746.7 399.2 C1748.4 399.2 1748.4 399.1 1750.0 399.1 C1751.7 399.1 1751.7 399.8 1753.4 399.8 C1755.1 399.8 1755.1 401.0 1756.7 401.0 C1758.4 401.0 1758.4 400.5 1760.1 400.5 C1761.8 400.5 1761.8 400.5 1763.5 400.5 C1765.1 400.5 1765.1 400.4 1766.8 400.4 C1768.5 400.4 1768.5 399.6 1770.2 399.6 C1771.8 399.6 1771.8 399.4 1773.5 399.4 C1775.2 399.4 1775.2 400.3 1776.9 400.3 C1779.4 400.3 1779.4 371.2 1781.9 371.2 C1783.9 371.2 1783.9 371.0 1786.0 371.0 C1788.0 371.0 1788.0 371.9 1790.0 371.9 C1792.9 371.9 1792.9 399.2 1795.9 399.2 C1797.5 399.2 1797.5 398.9 1799.2 398.9 C1800.8 398.9 1800.8 398.7 1802.5 398.7 C1804.2 398.7 1804.2 398.1 1805.8 398.1 C1807.5 398.1 1807.5 398.4 1809.1 398.4 C1810.8 398.4 1810.8 399.6 1812.4 399.6 C1815.1 399.6 1815.1 372.5 1817.7 372.5 C1819.7 372.5 1819.7 371.6 1821.7 371.6 C1823.7 371.6 1823.7 372.9 1825.7 372.9 C1828.5 372.9 1828.5 396.3 1831.3 396.3 C1833.1 396.3 1833.1 397.4 1834.8 397.4 C1836.6 397.4 1836.6 397.9 1838.4 397.9 C1840.1 397.9 1840.1 397.3 1841.9 397.3 C1843.7 397.3 1843.7 396.2 1845.4 396.2 C1847.2 396.2 1847.2 397.8 1848.9 397.8 C1850.7 397.8 1850.7 397.9 1852.5 397.9 C1854.2 397.9 1854.2 396.2 1856.0 396.2" fill="none" stroke="#d4486a" stroke-width="0.5" opacity="0.8"/><path d="M1513.0 400.0 C1513.3 400.0 1513.3 396.9 1513.7 396.9 C1515.3 396.9 1515.3 396.7 1517.0 396.7 C1518.6 396.7 1518.6 396.2 1520.3 396.2 C1521.9 396.2 1521.9 396.8 1523.6 396.8 C1525.2 396.8 1525.2 397.6 1526.9 397.6 C1528.5 397.6 1528.5 397.0 1530.2 397.0 C1531.8 397.0 1531.8 397.4 1533.5 397.4 C1535.1 397.4 1535.1 396.1 1536.8 396.1 C1538.4 396.1 1538.4 397.1 1540.1 397.1 C1541.7 397.1 1541.7 397.1 1543.4 397.1 C1545.9 397.1 1545.9 366.0 1548.4 366.0 C1550.6 366.0 1550.6 367.2 1552.8 367.2 C1555.9 367.2 1555.9 376.6 1558.9 376.6 C1560.7 376.6 1560.7 376.2 1562.4 376.2 C1565.4 376.2 1565.4 402.2 1568.3 402.2 C1570.0 402.2 1570.0 401.3 1571.7 401.3 C1573.4 401.3 1573.4 401.7 1575.1 401.7 C1576.8 401.7 1576.8 401.6 1578.5 401.6 C1580.2 401.6 1580.2 402.4 1581.8 402.4 C1583.5 402.4 1583.5 401.4 1585.2 401.4 C1586.9 401.4 1586.9 402.3 1588.6 402.3 C1590.3 402.3 1590.3 400.7 1592.0 400.7 C1593.7 400.7 1593.7 401.2 1595.3 401.2 C1598.3 401.2 1598.3 367.3 1601.3 367.3 C1603.2 367.3 1603.2 367.3 1605.1 367.3 C1607.0 367.3 1607.0 366.0 1608.9 366.0 C1610.8 366.0 1610.8 366.0 1612.7 366.0 C1615.9 366.0 1615.9 370.1 1619.0 370.1 C1620.6 370.1 1620.6 370.8 1622.3 370.8 C1623.9 370.8 1623.9 370.2 1625.6 370.2 C1627.2 370.2 1627.2 370.2 1628.8 370.2 C1631.7 370.2 1631.7 376.0 1634.6 376.0 C1636.4 376.0 1636.4 376.7 1638.3 376.7 C1640.2 376.7 1640.2 377.2 1642.1 377.2 C1643.9 377.2 1643.9 376.9 1645.8 376.9 C1649.2 376.9 1649.2 371.1 1652.5 371.1 C1654.6 371.1 1654.6 370.8 1656.6 370.8 C1659.9 370.8 1659.9 364.5 1663.1 364.5 C1664.9 364.5 1664.9 364.8 1666.7 364.8 C1668.6 364.8 1668.6 365.8 1670.4 365.8 C1672.2 365.8 1672.2 365.0 1674.1 365.0 C1676.8 365.0 1676.8 402.4 1679.6 402.4 C1681.4 402.4 1681.4 403.2 1683.2 403.2 C1685.0 403.2 1685.0 402.7 1686.7 402.7 C1688.5 402.7 1688.5 402.6 1690.3 402.6 C1692.1 402.6 1692.1 401.5 1693.9 401.5 C1696.9 401.5 1696.9 369.5 1699.9 369.5 C1701.7 369.5 1701.7 371.3 1703.5 371.3 C1705.3 371.3 1705.3 370.0 1707.2 370.0 C1709.0 370.0 1709.0 370.9 1710.8 370.9 C1713.8 370.9 1713.8 401.7 1716.7 401.7 C1718.5 401.7 1718.5 401.8 1720.2 401.8 C1721.9 401.8 1721.9 402.4 1723.7 402.4 C1725.4 402.4 1725.4 401.7 1727.1 401.7 C1728.9 401.7 1728.9 402.2 1730.6 402.2 C1732.3 402.2 1732.3 401.6 1734.1 401.6 C1737.1 401.6 1737.1 377.2 1740.1 377.2 C1742.1 377.2 1742.1 378.9 1744.1 378.9 C1746.1 378.9 1746.1 378.7 1748.1 378.7 C1750.0 378.7 1750.0 378.5 1752.0 378.5 C1754.8 378.5 1754.8 399.6 1757.7 399.6 C1759.4 399.6 1759.4 399.5 1761.2 399.5 C1762.9 399.5 1762.9 398.9 1764.6 398.9 C1766.4 398.9 1766.4 399.5 1768.1 399.5 C1769.8 399.5 1769.8 397.9 1771.6 397.9 C1773.3 397.9 1773.3 398.2 1775.0 398.2 C1776.8 398.2 1776.8 398.7 1778.5 398.7 C1780.2 398.7 1780.2 398.7 1782.0 398.7 C1783.7 398.7 1783.7 399.5 1785.5 399.5 C1787.2 399.5 1787.2 398.9 1788.9 398.9 C1791.9 398.9 1791.9 370.2 1794.9 370.2 C1796.5 370.2 1796.5 369.9 1798.2 369.9 C1799.8 369.9 1799.8 369.5 1801.4 369.5 C1803.1 369.5 1803.1 369.4 1804.7 369.4 C1806.4 369.4 1806.4 369.0 1808.0 369.0 C1810.5 369.0 1810.5 401.9 1812.9 401.9 C1814.6 401.9 1814.6 401.6 1816.2 401.6 C1817.8 401.6 1817.8 402.8 1819.5 402.8 C1821.1 402.8 1821.1 402.5 1822.7 402.5 C1824.4 402.5 1824.4 402.2 1826.0 402.2 C1827.6 402.2 1827.6 402.6 1829.3 402.6 C1831.9 402.6 1831.9 368.0 1834.5 368.0 C1836.2 368.0 1836.2 366.9 1837.8 366.9 C1839.4 366.9 1839.4 367.8 1841.1 367.8 C1842.7 367.8 1842.7 366.5 1844.3 366.5 C1846.8 366.5 1846.8 401.7 1849.4 401.7 C1851.0 401.7 1851.0 401.8 1852.6 401.8 C1854.2 401.8 1854.2 401.2 1855.8 401.2 C1856.1 401.2 1856.1 401.8 1856.5 401.8 C1856.5 401.8 1856.5 401.8 1856.5 401.8 C1856.5 401.8 1856.5 400.2 1856.5 400.2 C1856.5 400.2 1856.5 401.3 1856.5 401.3 C1856.5 401.3 1856.5 401.4 1856.5 401.4 C1856.5 401.4 1856.5 401.3 1856.5 401.3 C1856.5 401.3 1856.5 400.5 1856.5 400.5" fill="none" stroke="#7fbf6a" stroke-width="0.5" opacity="0.8"/><path d="M1513.0 402.2 C1516.4 402.2 1516.4 401.1 1519.8 401.1 C1521.6 401.1 1521.6 399.7 1523.5 399.7 C1525.3 399.7 1525.3 399.6 1527.1 399.6 C1529.0 399.6 1529.0 399.7 1530.8 399.7 C1532.6 399.7 1532.6 399.7 1534.5 399.7 C1536.3 399.7 1536.3 400.4 1538.1 400.4 C1541.4 400.4 1541.4 373.5 1544.6 373.5 C1546.6 373.5 1546.6 374.0 1548.6 374.0 C1552.0 374.0 1552.0 399.4 1555.3 399.4 C1556.9 399.4 1556.9 399.2 1558.6 399.2 C1560.3 399.2 1560.3 399.5 1562.0 399.5 C1563.6 399.5 1563.6 399.2 1565.3 399.2 C1567.0 399.2 1567.0 398.2 1568.7 398.2 C1570.3 398.2 1570.3 398.7 1572.0 398.7 C1573.7 398.7 1573.7 399.2 1575.4 399.2 C1577.0 399.2 1577.0 399.3 1578.7 399.3 C1580.4 399.3 1580.4 399.1 1582.0 399.1 C1583.7 399.1 1583.7 399.4 1585.4 399.4 C1588.4 399.4 1588.4 364.1 1591.5 364.1 C1593.2 364.1 1593.2 364.6 1594.8 364.6 C1596.5 364.6 1596.5 365.0 1598.2 365.0 C1599.9 365.0 1599.9 364.9 1601.5 364.9 C1604.3 364.9 1604.3 397.8 1607.1 397.8 C1608.9 397.8 1608.9 397.5 1610.6 397.5 C1612.3 397.5 1612.3 399.2 1614.1 399.2 C1615.8 399.2 1615.8 398.6 1617.6 398.6 C1619.3 398.6 1619.3 397.7 1621.1 397.7 C1622.8 397.7 1622.8 399.4 1624.5 399.4 C1626.3 399.4 1626.3 398.6 1628.0 398.6 C1629.8 398.6 1629.8 399.0 1631.5 399.0 C1633.3 399.0 1633.3 399.1 1635.0 399.1 C1636.7 399.1 1636.7 398.0 1638.5 398.0 C1640.2 398.0 1640.2 398.5 1642.0 398.5 C1644.6 398.5 1644.6 375.0 1647.3 375.0 C1649.2 375.0 1649.2 375.2 1651.1 375.2 C1653.0 375.2 1653.0 375.5 1654.9 375.5 C1657.6 375.5 1657.6 396.6 1660.2 396.6 C1661.9 396.6 1661.9 397.9 1663.6 397.9 C1665.3 397.9 1665.3 396.7 1667.0 396.7 C1668.7 396.7 1668.7 396.7 1670.4 396.7 C1672.1 396.7 1672.1 397.5 1673.8 397.5 C1675.5 397.5 1675.5 396.8 1677.2 396.8 C1678.9 396.8 1678.9 396.6 1680.6 396.6 C1682.3 396.6 1682.3 396.4 1684.0 396.4 C1685.7 396.4 1685.7 396.6 1687.4 396.6 C1689.1 396.6 1689.1 396.6 1690.8 396.6 C1692.5 396.6 1692.5 398.0 1694.2 398.0 C1695.9 398.0 1695.9 396.3 1697.6 396.3 C1700.5 396.3 1700.5 363.3 1703.4 363.3 C1705.2 363.3 1705.2 364.0 1707.0 364.0 C1708.7 364.0 1708.7 362.6 1710.5 362.6 C1712.3 362.6 1712.3 363.4 1714.1 363.4 C1716.9 363.4 1716.9 402.7 1719.7 402.7 C1721.3 402.7 1721.3 401.5 1723.0 401.5 C1724.7 401.5 1724.7 402.5 1726.4 402.5 C1728.0 402.5 1728.0 401.2 1729.7 401.2 C1731.4 401.2 1731.4 401.1 1733.0 401.1 C1734.7 401.1 1734.7 401.3 1736.4 401.3 C1738.1 401.3 1738.1 401.1 1739.7 401.1 C1741.4 401.1 1741.4 401.4 1743.1 401.4 C1744.8 401.4 1744.8 401.2 1746.4 401.2 C1749.0 401.2 1749.0 399.4 1751.5 399.4 C1753.2 399.4 1753.2 400.0 1754.9 400.0 C1756.5 400.0 1756.5 398.5 1758.2 398.5 C1759.9 398.5 1759.9 398.5 1761.6 398.5 C1763.3 398.5 1763.3 399.8 1765.0 399.8 C1766.6 399.8 1766.6 398.4 1768.3 398.4 C1770.0 398.4 1770.0 399.4 1771.7 399.4 C1773.4 399.4 1773.4 399.7 1775.0 399.7 C1778.1 399.7 1778.1 368.5 1781.2 368.5 C1783.0 368.5 1783.0 367.4 1784.9 367.4 C1786.7 367.4 1786.7 368.9 1788.5 368.9 C1791.9 368.9 1791.9 398.1 1795.2 398.1 C1796.9 398.1 1796.9 398.0 1798.6 398.0 C1800.4 398.0 1800.4 397.4 1802.1 397.4 C1803.9 397.4 1803.9 396.6 1805.6 396.6 C1807.3 396.6 1807.3 398.0 1809.1 398.0 C1810.8 398.0 1810.8 398.1 1812.6 398.1 C1814.3 398.1 1814.3 397.8 1816.0 397.8 C1817.8 397.8 1817.8 397.0 1819.5 397.0 C1821.3 397.0 1821.3 398.3 1823.0 398.3 C1826.0 398.3 1826.0 366.5 1828.9 366.5 C1830.8 366.5 1830.8 367.8 1832.7 367.8 C1834.5 367.8 1834.5 366.1 1836.4 366.1 C1838.2 366.1 1838.2 367.7 1840.1 367.7 C1843.0 367.7 1843.0 396.4 1846.0 396.4 C1847.6 396.4 1847.6 396.2 1849.2 396.2 C1850.8 396.2 1850.8 397.0 1852.4 397.0 C1854.0 397.0 1854.0 396.4 1855.6 396.4 C1856.0 396.4 1856.0 396.8 1856.5 396.8 C1856.5 396.8 1856.5 396.2 1856.5 396.2 C1856.5 396.2 1856.5 396.2 1856.5 396.2 C1856.5 396.2 1856.5 397.1 1856.5 397.1 C1856.5 397.1 1856.5 396.1 1856.5 396.1 C1856.5 396.1 1856.5 396.5 1856.5 396.5" fill="none" stroke="#6a9fd4" stroke-width="0.5" opacity="0.8"/><path d="M1513.0 399.7 C1516.2 399.7 1516.2 396.9 1519.4 396.9 C1521.3 396.9 1521.3 398.0 1523.1 398.0 C1525.0 398.0 1525.0 396.7 1526.8 396.7 C1530.0 396.7 1530.0 401.1 1533.1 401.1 C1534.9 401.1 1534.9 402.1 1536.8 402.1 C1538.6 402.1 1538.6 402.0 1540.4 402.0 C1542.3 402.0 1542.3 400.7 1544.1 400.7 C1545.9 400.7 1545.9 402.2 1547.7 402.2 C1550.9 402.2 1550.9 401.9 1554.0 401.9 C1555.8 401.9 1555.8 400.5 1557.5 400.5 C1559.2 400.5 1559.2 400.8 1560.9 400.8 C1562.6 400.8 1562.6 401.5 1564.3 401.5 C1566.0 401.5 1566.0 400.9 1567.7 400.9 C1569.5 400.9 1569.5 400.9 1571.2 400.9 C1572.9 400.9 1572.9 401.2 1574.6 401.2 C1576.3 401.2 1576.3 401.4 1578.0 401.4 C1579.7 401.4 1579.7 402.3 1581.5 402.3 C1583.2 402.3 1583.2 401.6 1584.9 401.6 C1586.6 401.6 1586.6 401.6 1588.3 401.6 C1590.0 401.6 1590.0 401.9 1591.7 401.9 C1594.4 401.9 1594.4 376.0 1597.0 376.0 C1598.9 376.0 1598.9 376.2 1600.7 376.2 C1602.5 376.2 1602.5 375.3 1604.3 375.3 C1606.2 375.3 1606.2 376.0 1608.0 376.0 C1611.1 376.0 1611.1 369.3 1614.2 369.3 C1616.2 369.3 1616.2 369.5 1618.2 369.5 C1620.1 369.5 1620.1 369.7 1622.1 369.7 C1624.1 369.7 1624.1 369.1 1626.1 369.1 C1629.2 369.1 1629.2 372.2 1632.2 372.2 C1634.0 372.2 1634.0 373.1 1635.8 373.1 C1638.8 373.1 1638.8 402.7 1641.8 402.7 C1643.7 402.7 1643.7 402.8 1645.6 402.8 C1647.6 402.8 1647.6 401.9 1649.5 401.9 C1651.4 401.9 1651.4 401.6 1653.3 401.6 C1656.4 401.6 1656.4 368.5 1659.5 368.5 C1661.5 368.5 1661.5 369.2 1663.6 369.2 C1665.6 369.2 1665.6 368.3 1667.7 368.3 C1670.7 368.3 1670.7 401.1 1673.8 401.1 C1675.5 401.1 1675.5 401.0 1677.2 401.0 C1678.8 401.0 1678.8 401.1 1680.5 401.1 C1682.2 401.1 1682.2 401.5 1683.9 401.5 C1685.5 401.5 1685.5 402.1 1687.2 402.1 C1688.9 402.1 1688.9 400.9 1690.5 400.9 C1692.2 400.9 1692.2 401.9 1693.9 401.9 C1695.6 401.9 1695.6 401.4 1697.2 401.4 C1698.9 401.4 1698.9 401.6 1700.6 401.6 C1702.3 401.6 1702.3 401.5 1703.9 401.5 C1705.6 401.5 1705.6 401.7 1707.3 401.7 C1708.9 401.7 1708.9 400.9 1710.6 400.9 C1713.5 400.9 1713.5 372.6 1716.4 372.6 C1718.3 372.6 1718.3 373.7 1720.1 373.7 C1722.0 373.7 1722.0 372.1 1723.8 372.1 C1725.7 372.1 1725.7 371.8 1727.6 371.8 C1730.3 371.8 1730.3 397.2 1733.0 397.2 C1734.7 397.2 1734.7 397.6 1736.3 397.6 C1737.9 397.6 1737.9 398.2 1739.5 398.2 C1741.1 398.2 1741.1 397.0 1742.7 397.0 C1745.5 397.0 1745.5 400.9 1748.2 400.9 C1749.8 400.9 1749.8 400.2 1751.5 400.2 C1753.2 400.2 1753.2 400.7 1754.8 400.7 C1756.5 400.7 1756.5 399.8 1758.2 399.8 C1759.8 399.8 1759.8 399.8 1761.5 399.8 C1763.2 399.8 1763.2 400.5 1764.8 400.5 C1766.5 400.5 1766.5 400.6 1768.2 400.6 C1769.8 400.6 1769.8 400.4 1771.5 400.4 C1773.2 400.4 1773.2 399.4 1774.8 399.4 C1776.5 399.4 1776.5 399.9 1778.1 399.9 C1780.8 399.9 1780.8 374.4 1783.5 374.4 C1785.6 374.4 1785.6 374.8 1787.6 374.8 C1790.5 374.8 1790.5 402.8 1793.3 402.8 C1795.0 402.8 1795.0 402.9 1796.6 402.9 C1798.3 402.9 1798.3 402.4 1800.0 402.4 C1801.6 402.4 1801.6 402.5 1803.3 402.5 C1805.0 402.5 1805.0 402.3 1806.6 402.3 C1808.3 402.3 1808.3 401.0 1810.0 401.0 C1811.6 401.0 1811.6 401.5 1813.3 401.5 C1815.0 401.5 1815.0 401.4 1816.7 401.4 C1818.3 401.4 1818.3 401.0 1820.0 401.0 C1822.9 401.0 1822.9 374.6 1825.8 374.6 C1827.6 374.6 1827.6 374.7 1829.4 374.7 C1831.1 374.7 1831.1 374.3 1832.9 374.3 C1835.6 374.3 1835.6 375.7 1838.4 375.7 C1840.3 375.7 1840.3 375.3 1842.3 375.3 C1844.3 375.3 1844.3 374.6 1846.3 374.6 C1849.8 374.6 1849.8 397.5 1853.2 397.5 C1854.9 397.5 1854.9 396.8 1856.5 396.8 C1856.5 396.8 1856.5 397.7 1856.5 397.7 C1856.5 397.7 1856.5 397.6 1856.5 397.6 C1856.5 397.6 1856.5 397.5 1856.5 397.5 C1856.5 397.5 1856.5 396.6 1856.5 396.6 C1856.5 396.6 1856.5 397.4 1856.5 397.4" fill="none" stroke="#e86060" stroke-width="0.5" opacity="0.8"/><path d="M1513.0 399.6 C1515.1 399.6 1515.1 401.3 1517.1 401.3 C1518.8 401.3 1518.8 400.5 1520.4 400.5 C1522.1 400.5 1522.1 401.4 1523.7 401.4 C1525.4 401.4 1525.4 400.8 1527.0 400.8 C1528.7 400.8 1528.7 402.1 1530.3 402.1 C1532.0 402.1 1532.0 400.8 1533.6 400.8 C1535.3 400.8 1535.3 401.7 1536.9 401.7 C1538.6 401.7 1538.6 401.8 1540.2 401.8 C1541.9 401.8 1541.9 400.9 1543.5 400.9 C1545.2 400.9 1545.2 401.3 1546.8 401.3 C1549.5 401.3 1549.5 374.5 1552.1 374.5 C1554.0 374.5 1554.0 373.9 1555.9 373.9 C1557.8 373.9 1557.8 374.8 1559.7 374.8 C1562.7 374.8 1562.7 397.5 1565.8 397.5 C1567.5 397.5 1567.5 397.5 1569.3 397.5 C1571.0 397.5 1571.0 397.2 1572.7 397.2 C1574.5 397.2 1574.5 397.0 1576.2 397.0 C1577.9 397.0 1577.9 397.1 1579.6 397.1 C1581.4 397.1 1581.4 397.6 1583.1 397.6 C1584.8 397.6 1584.8 397.1 1586.6 397.1 C1589.2 397.1 1589.2 364.0 1591.7 364.0 C1593.6 364.0 1593.6 364.0 1595.5 364.0 C1598.5 364.0 1598.5 399.3 1601.5 399.3 C1603.3 399.3 1603.3 399.2 1605.0 399.2 C1606.8 399.2 1606.8 399.7 1608.5 399.7 C1610.2 399.7 1610.2 400.2 1612.0 400.2 C1613.7 400.2 1613.7 398.8 1615.5 398.8 C1618.0 398.8 1618.0 373.0 1620.6 373.0 C1622.6 373.0 1622.6 374.2 1624.6 374.2 C1626.6 374.2 1626.6 373.7 1628.6 373.7 C1630.6 373.7 1630.6 373.9 1632.6 373.9 C1635.9 373.9 1635.9 397.4 1639.3 397.4 C1640.9 397.4 1640.9 398.5 1642.6 398.5 C1644.2 398.5 1644.2 396.8 1645.8 396.8 C1647.4 396.8 1647.4 398.5 1649.1 398.5 C1650.7 398.5 1650.7 397.9 1652.3 397.9 C1655.0 397.9 1655.0 370.0 1657.7 370.0 C1659.8 370.0 1659.8 371.2 1661.8 371.2 C1663.9 371.2 1663.9 369.9 1666.0 369.9 C1669.0 369.9 1669.0 399.7 1672.1 399.7 C1673.9 399.7 1673.9 400.6 1675.6 400.6 C1677.4 400.6 1677.4 400.3 1679.1 400.3 C1681.7 400.3 1681.7 367.2 1684.2 367.2 C1685.9 367.2 1685.9 366.8 1687.5 366.8 C1689.2 366.8 1689.2 366.2 1690.8 366.2 C1693.9 366.2 1693.9 373.9 1697.0 373.9 C1699.3 373.9 1699.3 373.2 1701.7 373.2 C1705.2 373.2 1705.2 398.8 1708.7 398.8 C1710.6 398.8 1710.6 399.1 1712.5 399.1 C1714.4 399.1 1714.4 400.6 1716.2 400.6 C1718.1 400.6 1718.1 400.2 1720.0 400.2 C1721.9 400.2 1721.9 399.3 1723.8 399.3 C1727.1 399.3 1727.1 369.3 1730.5 369.3 C1732.5 369.3 1732.5 368.4 1734.4 368.4 C1736.3 368.4 1736.3 369.2 1738.3 369.2 C1740.2 369.2 1740.2 367.8 1742.2 367.8 C1745.2 367.8 1745.2 396.5 1748.2 396.5 C1749.9 396.5 1749.9 397.0 1751.7 397.0 C1753.4 397.0 1753.4 396.6 1755.2 396.6 C1756.9 396.6 1756.9 396.3 1758.7 396.3 C1760.4 396.3 1760.4 396.5 1762.2 396.5 C1763.9 396.5 1763.9 396.4 1765.7 396.4 C1767.4 396.4 1767.4 396.8 1769.2 396.8 C1771.0 396.8 1771.0 397.1 1772.7 397.1 C1774.5 397.1 1774.5 398.0 1776.2 398.0 C1778.0 398.0 1778.0 397.5 1779.7 397.5 C1782.8 397.5 1782.8 369.4 1785.9 369.4 C1787.6 369.4 1787.6 368.9 1789.3 368.9 C1791.0 368.9 1791.0 369.4 1792.7 369.4 C1795.8 369.4 1795.8 401.5 1799.0 401.5 C1800.6 401.5 1800.6 400.1 1802.3 400.1 C1803.9 400.1 1803.9 401.0 1805.5 401.0 C1807.2 401.0 1807.2 401.5 1808.8 401.5 C1810.4 401.5 1810.4 400.9 1812.1 400.9 C1813.7 400.9 1813.7 400.3 1815.3 400.3 C1817.0 400.3 1817.0 401.8 1818.6 401.8 C1820.2 401.8 1820.2 400.0 1821.9 400.0 C1824.9 400.0 1824.9 376.7 1828.0 376.7 C1830.0 376.7 1830.0 377.2 1832.0 377.2 C1834.0 377.2 1834.0 376.9 1835.9 376.9 C1837.9 376.9 1837.9 377.1 1839.9 377.1 C1842.9 377.1 1842.9 371.3 1846.0 371.3 C1847.7 371.3 1847.7 371.3 1849.3 371.3 C1851.0 371.3 1851.0 373.0 1852.7 373.0" fill="none" stroke="#ee7a7a" stroke-width="0.5" opacity="0.8"/><path d="M1513.0 400.2 C1516.9 400.2 1516.9 399.1 1520.9 399.1 C1522.8 399.1 1522.8 399.4 1524.6 399.4 C1526.5 399.4 1526.5 398.7 1528.4 398.7 C1530.2 398.7 1530.2 398.7 1532.1 398.7 C1535.4 398.7 1535.4 374.7 1538.8 374.7 C1540.9 374.7 1540.9 373.6 1543.0 373.6 C1545.0 373.6 1545.0 374.8 1547.1 374.8 C1550.3 374.8 1550.3 397.1 1553.6 397.1 C1555.2 397.1 1555.2 397.3 1556.9 397.3 C1558.6 397.3 1558.6 396.5 1560.3 396.5 C1562.0 396.5 1562.0 396.7 1563.6 396.7 C1565.3 396.7 1565.3 396.2 1567.0 396.2 C1568.7 396.2 1568.7 396.9 1570.3 396.9 C1573.2 396.9 1573.2 370.3 1576.0 370.3 C1577.7 370.3 1577.7 371.9 1579.4 371.9 C1581.1 371.9 1581.1 370.5 1582.8 370.5 C1584.4 370.5 1584.4 370.8 1586.1 370.8 C1587.8 370.8 1587.8 371.2 1589.5 371.2 C1592.1 371.2 1592.1 399.5 1594.7 399.5 C1596.4 399.5 1596.4 399.6 1598.2 399.6 C1599.9 399.6 1599.9 398.3 1601.6 398.3 C1603.3 398.3 1603.3 398.7 1605.0 398.7 C1606.8 398.7 1606.8 398.5 1608.5 398.5 C1610.2 398.5 1610.2 398.9 1611.9 398.9 C1613.6 398.9 1613.6 399.1 1615.3 399.1 C1618.5 399.1 1618.5 366.4 1621.6 366.4 C1623.5 366.4 1623.5 366.6 1625.4 366.6 C1627.2 366.6 1627.2 366.9 1629.1 366.9 C1631.0 366.9 1631.0 366.1 1632.9 366.1 C1635.6 366.1 1635.6 399.3 1638.4 399.3 C1640.1 399.3 1640.1 399.1 1641.8 399.1 C1643.5 399.1 1643.5 397.5 1645.2 397.5 C1646.9 397.5 1646.9 397.6 1648.6 397.6 C1650.3 397.6 1650.3 398.7 1652.0 398.7 C1653.8 398.7 1653.8 397.8 1655.5 397.8 C1657.2 397.8 1657.2 398.5 1658.9 398.5 C1661.7 398.5 1661.7 377.2 1664.6 377.2 C1666.4 377.2 1666.4 377.3 1668.1 377.3 C1669.9 377.3 1669.9 376.9 1671.6 376.9 C1674.4 376.9 1674.4 401.8 1677.1 401.8 C1678.8 401.8 1678.8 402.9 1680.5 402.9 C1682.2 402.9 1682.2 403.0 1683.9 403.0 C1685.6 403.0 1685.6 402.0 1687.3 402.0 C1689.0 402.0 1689.0 402.7 1690.7 402.7 C1692.3 402.7 1692.3 402.9 1694.0 402.9 C1695.7 402.9 1695.7 402.6 1697.4 402.6 C1699.1 402.6 1699.1 402.5 1700.8 402.5 C1702.5 402.5 1702.5 402.8 1704.2 402.8 C1706.9 402.8 1706.9 367.1 1709.6 367.1 C1712.0 367.1 1712.0 367.2 1714.4 367.2 C1717.7 367.2 1717.7 400.4 1721.1 400.4 C1722.8 400.4 1722.8 401.4 1724.6 401.4 C1726.4 401.4 1726.4 401.7 1728.2 401.7 C1731.2 401.7 1731.2 365.1 1734.2 365.1 C1736.1 365.1 1736.1 365.2 1737.9 365.2 C1739.8 365.2 1739.8 363.9 1741.7 363.9 C1744.5 363.9 1744.5 401.2 1747.4 401.2 C1749.1 401.2 1749.1 401.2 1750.7 401.2 C1752.3 401.2 1752.3 401.5 1754.0 401.5 C1755.6 401.5 1755.6 402.1 1757.2 402.1 C1758.8 402.1 1758.8 400.7 1760.5 400.7 C1762.1 400.7 1762.1 401.2 1763.7 401.2 C1765.4 401.2 1765.4 402.3 1767.0 402.3 C1768.6 402.3 1768.6 400.8 1770.2 400.8 C1771.9 400.8 1771.9 400.8 1773.5 400.8 C1775.1 400.8 1775.1 402.0 1776.8 402.0 C1779.6 402.0 1779.6 364.7 1782.5 364.7 C1784.4 364.7 1784.4 364.0 1786.4 364.0 C1788.3 364.0 1788.3 364.3 1790.2 364.3 C1793.6 364.3 1793.6 399.9 1797.0 399.9 C1798.6 399.9 1798.6 400.5 1800.2 400.5 C1801.8 400.5 1801.8 400.7 1803.4 400.7 C1805.1 400.7 1805.1 399.5 1806.7 399.5 C1808.3 399.5 1808.3 399.3 1809.9 399.3 C1811.5 399.3 1811.5 400.1 1813.1 400.1 C1814.8 400.1 1814.8 399.6 1816.4 399.6 C1819.2 399.6 1819.2 371.8 1822.0 371.8 C1824.1 371.8 1824.1 370.5 1826.1 370.5 C1828.1 370.5 1828.1 370.4 1830.1 370.4 C1833.1 370.4 1833.1 401.4 1836.2 401.4 C1837.9 401.4 1837.9 401.0 1839.7 401.0 C1841.5 401.0 1841.5 400.1 1843.2 400.1 C1845.0 400.1 1845.0 401.6 1846.8 401.6 C1848.5 401.6 1848.5 400.2 1850.3 400.2 C1853.1 400.2 1853.1 374.7 1855.9 374.7 C1856.2 374.7 1856.2 375.7 1856.5 375.7 C1856.5 375.7 1856.5 374.7 1856.5 374.7" fill="none" stroke="#e55050" stroke-width="0.5" opacity="0.8"/><path d="M1513.0 402.1 C1516.1 402.1 1516.1 401.3 1519.2 401.3 C1521.1 401.3 1521.1 400.3 1522.9 400.3 C1524.7 400.3 1524.7 402.1 1526.6 402.1 C1529.2 402.1 1529.2 370.1 1531.9 370.1 C1533.8 370.1 1533.8 368.8 1535.7 368.8 C1537.5 368.8 1537.5 370.0 1539.4 370.0 C1541.3 370.0 1541.3 369.6 1543.2 369.6 C1546.5 369.6 1546.5 396.7 1549.7 396.7 C1551.5 396.7 1551.5 396.3 1553.3 396.3 C1555.0 396.3 1555.0 396.6 1556.8 396.6 C1558.5 396.6 1558.5 397.7 1560.3 397.7 C1562.1 397.7 1562.1 397.3 1563.8 397.3 C1565.6 397.3 1565.6 397.2 1567.3 397.2 C1569.1 397.2 1569.1 397.2 1570.8 397.2 C1572.6 397.2 1572.6 396.3 1574.4 396.3 C1576.1 396.3 1576.1 398.1 1577.9 398.1 C1579.6 398.1 1579.6 397.4 1581.4 397.4 C1584.4 397.4 1584.4 370.9 1587.3 370.9 C1589.3 370.9 1589.3 371.4 1591.3 371.4 C1593.3 371.4 1593.3 370.1 1595.3 370.1 C1597.2 370.1 1597.2 371.5 1599.2 371.5 C1602.4 371.5 1602.4 398.9 1605.7 398.9 C1607.5 398.9 1607.5 398.3 1609.3 398.3 C1611.2 398.3 1611.2 400.0 1613.0 400.0 C1614.9 400.0 1614.9 399.8 1616.7 399.8 C1620.0 399.8 1620.0 377.1 1623.3 377.1 C1625.1 377.1 1625.1 377.2 1627.0 377.2 C1628.8 377.2 1628.8 377.6 1630.6 377.6 C1633.8 377.6 1633.8 395.8 1636.9 395.8 C1638.9 395.8 1638.9 397.3 1640.8 397.3 C1642.8 397.3 1642.8 396.7 1644.8 396.7 C1648.2 396.7 1648.2 399.5 1651.7 399.5 C1653.4 399.5 1653.4 398.6 1655.2 398.6 C1657.0 398.6 1657.0 398.2 1658.8 398.2 C1660.5 398.2 1660.5 400.1 1662.3 400.1 C1664.1 400.1 1664.1 399.2 1665.9 399.2 C1667.6 399.2 1667.6 399.7 1669.4 399.7 C1671.2 399.7 1671.2 399.2 1673.0 399.2 C1675.6 399.2 1675.6 379.1 1678.2 379.1 C1680.6 379.1 1680.6 378.0 1682.9 378.0 C1686.4 378.0 1686.4 368.5 1689.8 368.5 C1691.8 368.5 1691.8 367.7 1693.8 367.7 C1695.8 367.7 1695.8 368.5 1697.8 368.5 C1700.7 368.5 1700.7 402.7 1703.6 402.7 C1705.3 402.7 1705.3 402.2 1706.9 402.2 C1708.6 402.2 1708.6 401.5 1710.3 401.5 C1712.0 401.5 1712.0 402.0 1713.7 402.0 C1716.8 402.0 1716.8 371.7 1720.0 371.7 C1721.6 371.7 1721.6 371.2 1723.2 371.2 C1724.8 371.2 1724.8 370.9 1726.4 370.9 C1729.3 370.9 1729.3 400.2 1732.2 400.2 C1733.8 400.2 1733.8 400.7 1735.5 400.7 C1737.2 400.7 1737.2 401.4 1738.8 401.4 C1740.5 401.4 1740.5 401.3 1742.1 401.3 C1743.8 401.3 1743.8 401.1 1745.5 401.1 C1747.1 401.1 1747.1 399.8 1748.8 399.8 C1750.5 399.8 1750.5 401.4 1752.1 401.4 C1753.8 401.4 1753.8 401.6 1755.4 401.6 C1757.1 401.6 1757.1 400.0 1758.8 400.0 C1760.4 400.0 1760.4 400.2 1762.1 400.2 C1763.8 400.2 1763.8 400.2 1765.4 400.2 C1767.1 400.2 1767.1 400.0 1768.7 400.0 C1771.3 400.0 1771.3 370.8 1773.9 370.8 C1775.6 370.8 1775.6 371.1 1777.4 371.1 C1779.1 371.1 1779.1 371.3 1780.8 371.3 C1782.6 371.3 1782.6 371.6 1784.3 371.6 C1787.4 371.6 1787.4 400.0 1790.4 400.0 C1792.4 400.0 1792.4 401.6 1794.3 401.6 C1796.3 401.6 1796.3 401.1 1798.3 401.1 C1801.1 401.1 1801.1 374.2 1804.0 374.2 C1805.9 374.2 1805.9 372.9 1807.7 372.9 C1809.6 372.9 1809.6 373.6 1811.5 373.6 C1814.4 373.6 1814.4 375.6 1817.4 375.6 C1819.4 375.6 1819.4 375.8 1821.4 375.8 C1823.4 375.8 1823.4 375.9 1825.4 375.9 C1828.5 375.9 1828.5 398.3 1831.5 398.3 C1833.2 398.3 1833.2 397.8 1834.9 397.8 C1836.5 397.8 1836.5 398.1 1838.2 398.1 C1839.8 398.1 1839.8 398.1 1841.5 398.1 C1843.2 398.1 1843.2 397.9 1844.8 397.9 C1846.5 397.9 1846.5 397.8 1848.1 397.8 C1849.8 397.8 1849.8 397.2 1851.4 397.2 C1853.1 397.2 1853.1 397.2 1854.8 397.2 C1855.6 397.2 1855.6 397.4 1856.5 397.4" fill="none" stroke="#ef8a8a" stroke-width="0.5" opacity="0.8"/><path d="M1513.0 401.2 C1516.9 401.2 1516.9 399.1 1520.8 399.1 C1522.4 399.1 1522.4 398.6 1524.0 398.6 C1525.7 398.6 1525.7 399.2 1527.3 399.2 C1528.9 399.2 1528.9 398.9 1530.6 398.9 C1532.2 398.9 1532.2 397.4 1533.8 397.4 C1535.5 397.4 1535.5 397.3 1537.1 397.3 C1538.7 397.3 1538.7 399.2 1540.4 399.2 C1542.0 399.2 1542.0 398.0 1543.6 398.0 C1545.3 398.0 1545.3 398.6 1546.9 398.6 C1548.5 398.6 1548.5 399.2 1550.2 399.2 C1551.8 399.2 1551.8 399.2 1553.4 399.2 C1555.1 399.2 1555.1 398.3 1556.7 398.3 C1559.3 398.3 1559.3 365.6 1562.0 365.6 C1563.8 365.6 1563.8 364.0 1565.5 364.0 C1567.2 364.0 1567.2 364.7 1569.0 364.7 C1570.7 364.7 1570.7 365.6 1572.5 365.6 C1575.7 365.6 1575.7 370.4 1578.8 370.4 C1580.8 370.4 1580.8 370.5 1582.7 370.5 C1584.7 370.5 1584.7 370.6 1586.6 370.6 C1588.6 370.6 1588.6 370.0 1590.6 370.0 C1593.6 370.0 1593.6 398.1 1596.6 398.1 C1598.4 398.1 1598.4 399.1 1600.1 399.1 C1601.9 399.1 1601.9 398.1 1603.7 398.1 C1606.4 398.1 1606.4 379.4 1609.0 379.4 C1610.9 379.4 1610.9 379.5 1612.7 379.5 C1614.5 379.5 1614.5 378.7 1616.3 378.7 C1618.2 378.7 1618.2 378.9 1620.0 378.9 C1623.0 378.9 1623.0 364.1 1626.0 364.1 C1627.9 364.1 1627.9 364.1 1629.9 364.1 C1631.8 364.1 1631.8 364.5 1633.8 364.5 C1635.7 364.5 1635.7 364.6 1637.6 364.6 C1640.6 364.6 1640.6 402.0 1643.6 402.0 C1645.4 402.0 1645.4 401.7 1647.2 401.7 C1648.9 401.7 1648.9 401.9 1650.7 401.9 C1652.4 401.9 1652.4 400.9 1654.2 400.9 C1655.9 400.9 1655.9 401.8 1657.7 401.8 C1660.2 401.8 1660.2 369.1 1662.8 369.1 C1664.5 369.1 1664.5 367.2 1666.2 367.2 C1667.9 367.2 1667.9 369.1 1669.6 369.1 C1672.5 369.1 1672.5 377.5 1675.5 377.5 C1677.3 377.5 1677.3 377.6 1679.2 377.6 C1681.0 377.6 1681.0 377.7 1682.8 377.7 C1685.7 377.7 1685.7 402.6 1688.5 402.6 C1690.4 402.6 1690.4 401.3 1692.4 401.3 C1694.3 401.3 1694.3 403.0 1696.3 403.0 C1698.3 403.0 1698.3 401.7 1700.2 401.7 C1703.6 401.7 1703.6 369.1 1707.0 369.1 C1708.8 369.1 1708.8 368.1 1710.5 368.1 C1712.3 368.1 1712.3 368.2 1714.1 368.2 C1715.8 368.2 1715.8 368.3 1717.6 368.3 C1720.9 368.3 1720.9 379.2 1724.1 379.2 C1725.9 379.2 1725.9 377.6 1727.7 377.6 C1729.5 377.6 1729.5 378.6 1731.4 378.6 C1734.1 378.6 1734.1 401.2 1736.9 401.2 C1738.5 401.2 1738.5 400.5 1740.2 400.5 C1741.8 400.5 1741.8 400.7 1743.5 400.7 C1745.1 400.7 1745.1 400.3 1746.8 400.3 C1748.4 400.3 1748.4 400.6 1750.0 400.6 C1751.7 400.6 1751.7 401.6 1753.3 401.6 C1756.0 401.6 1756.0 401.7 1758.6 401.7 C1760.3 401.7 1760.3 402.3 1762.0 402.3 C1763.7 402.3 1763.7 401.9 1765.4 401.9 C1767.1 401.9 1767.1 402.0 1768.8 402.0 C1771.8 402.0 1771.8 376.9 1774.8 376.9 C1777.2 376.9 1777.2 377.3 1779.5 377.3 C1782.9 377.3 1782.9 398.8 1786.3 398.8 C1788.1 398.8 1788.1 398.6 1789.9 398.6 C1791.7 398.6 1791.7 398.9 1793.5 398.9 C1795.2 398.9 1795.2 400.1 1797.0 400.1 C1798.8 400.1 1798.8 400.3 1800.6 400.3 C1802.4 400.3 1802.4 399.2 1804.2 399.2 C1805.9 399.2 1805.9 398.6 1807.7 398.6 C1809.5 398.6 1809.5 398.8 1811.3 398.8 C1814.5 398.8 1814.5 364.6 1817.8 364.6 C1819.6 364.6 1819.6 364.3 1821.5 364.3 C1823.3 364.3 1823.3 365.6 1825.2 365.6 C1828.5 365.6 1828.5 398.3 1831.9 398.3 C1833.6 398.3 1833.6 398.9 1835.2 398.9 C1836.9 398.9 1836.9 397.4 1838.6 397.4 C1840.2 397.4 1840.2 397.7 1841.9 397.7 C1843.6 397.7 1843.6 399.0 1845.2 399.0 C1846.9 399.0 1846.9 398.4 1848.6 398.4 C1850.3 398.4 1850.3 398.7 1851.9 398.7 C1853.6 398.7 1853.6 398.6 1855.3 398.6 C1855.9 398.6 1855.9 399.0 1856.5 399.0 C1856.5 399.0 1856.5 397.9 1856.5 397.9 C1856.5 397.9 1856.5 397.7 1856.5 397.7" fill="none" stroke="#e86a5a" stroke-width="0.5" opacity="0.8"/><path d="M1513.0 400.1 C1515.0 400.1 1515.0 400.8 1517.0 400.8 C1518.8 400.8 1518.8 400.9 1520.5 400.9 C1522.2 400.9 1522.2 400.4 1524.0 400.4 C1525.7 400.4 1525.7 400.4 1527.4 400.4 C1529.2 400.4 1529.2 400.3 1530.9 400.3 C1532.6 400.3 1532.6 400.3 1534.4 400.3 C1536.1 400.3 1536.1 399.8 1537.9 399.8 C1539.6 399.8 1539.6 400.5 1541.3 400.5 C1543.1 400.5 1543.1 401.1 1544.8 401.1 C1546.5 401.1 1546.5 399.9 1548.3 399.9 C1551.1 399.9 1551.1 378.3 1553.9 378.3 C1555.6 378.3 1555.6 377.0 1557.2 377.0 C1558.9 377.0 1558.9 377.9 1560.6 377.9 C1563.3 377.9 1563.3 398.5 1566.0 398.5 C1567.7 398.5 1567.7 399.1 1569.4 399.1 C1571.0 399.1 1571.0 398.0 1572.7 398.0 C1574.4 398.0 1574.4 398.8 1576.1 398.8 C1578.9 398.8 1578.9 375.8 1581.7 375.8 C1583.6 375.8 1583.6 375.2 1585.5 375.2 C1588.4 375.2 1588.4 398.5 1591.2 398.5 C1592.9 398.5 1592.9 398.6 1594.7 398.6 C1596.4 398.6 1596.4 399.8 1598.1 399.8 C1600.8 399.8 1600.8 368.3 1603.4 368.3 C1605.2 368.3 1605.2 368.3 1606.9 368.3 C1610.0 368.3 1610.0 373.7 1613.1 373.7 C1615.2 373.7 1615.2 372.2 1617.4 372.2 C1620.5 372.2 1620.5 399.6 1623.6 399.6 C1625.5 399.6 1625.5 399.7 1627.4 399.7 C1629.4 399.7 1629.4 398.1 1631.3 398.1 C1634.5 398.1 1634.5 366.6 1637.6 366.6 C1639.5 366.6 1639.5 365.7 1641.4 365.7 C1643.4 365.7 1643.4 366.7 1645.3 366.7 C1648.1 366.7 1648.1 400.2 1650.8 400.2 C1652.5 400.2 1652.5 400.4 1654.2 400.4 C1655.9 400.4 1655.9 400.3 1657.6 400.3 C1659.3 400.3 1659.3 399.4 1661.0 399.4 C1662.7 399.4 1662.7 401.0 1664.4 401.0 C1666.1 401.0 1666.1 401.3 1667.8 401.3 C1669.5 401.3 1669.5 400.0 1671.2 400.0 C1672.9 400.0 1672.9 400.0 1674.6 400.0 C1676.3 400.0 1676.3 399.9 1678.0 399.9 C1679.7 399.9 1679.7 400.7 1681.4 400.7 C1683.1 400.7 1683.1 400.4 1684.8 400.4 C1687.7 400.4 1687.7 371.6 1690.6 371.6 C1693.0 371.6 1693.0 371.8 1695.4 371.8 C1699.0 371.8 1699.0 371.6 1702.7 371.6 C1704.8 371.6 1704.8 370.7 1706.8 370.7 C1710.0 370.7 1710.0 397.7 1713.1 397.7 C1714.8 397.7 1714.8 398.1 1716.5 398.1 C1718.2 398.1 1718.2 397.6 1720.0 397.6 C1721.7 397.6 1721.7 398.0 1723.4 398.0 C1725.1 398.0 1725.1 399.2 1726.8 399.2 C1728.5 399.2 1728.5 399.0 1730.2 399.0 C1732.0 399.0 1732.0 397.9 1733.7 397.9 C1735.4 397.9 1735.4 397.9 1737.1 397.9 C1739.7 397.9 1739.7 402.0 1742.4 402.0 C1744.0 402.0 1744.0 401.9 1745.7 401.9 C1747.3 401.9 1747.3 401.6 1749.0 401.6 C1750.6 401.6 1750.6 402.5 1752.3 402.5 C1753.9 402.5 1753.9 402.8 1755.6 402.8 C1757.2 402.8 1757.2 401.9 1758.9 401.9 C1760.5 401.9 1760.5 403.1 1762.2 403.1 C1763.8 403.1 1763.8 402.3 1765.5 402.3 C1767.1 402.3 1767.1 401.6 1768.8 401.6 C1770.4 401.6 1770.4 402.5 1772.1 402.5 C1773.7 402.5 1773.7 401.4 1775.4 401.4 C1777.1 401.4 1777.1 401.9 1778.7 401.9 C1781.6 401.9 1781.6 370.1 1784.4 370.1 C1786.4 370.1 1786.4 368.8 1788.5 368.8 C1791.6 368.8 1791.6 400.9 1794.7 400.9 C1796.7 400.9 1796.7 400.7 1798.7 400.7 C1800.7 400.7 1800.7 400.3 1802.7 400.3 C1804.7 400.3 1804.7 400.4 1806.7 400.4 C1809.5 400.4 1809.5 364.3 1812.3 364.3 C1814.1 364.3 1814.1 364.6 1815.8 364.6 C1817.6 364.6 1817.6 364.7 1819.3 364.7 C1822.3 364.7 1822.3 400.5 1825.3 400.5 C1827.0 400.5 1827.0 400.4 1828.7 400.4 C1830.3 400.4 1830.3 400.5 1832.0 400.5 C1833.7 400.5 1833.7 401.7 1835.3 401.7 C1837.0 401.7 1837.0 400.9 1838.7 400.9 C1840.4 400.9 1840.4 401.8 1842.0 401.8 C1843.7 401.8 1843.7 400.9 1845.4 400.9 C1847.1 400.9 1847.1 400.7 1848.7 400.7 C1850.4 400.7 1850.4 401.2 1852.1 401.2 C1853.8 401.2 1853.8 400.0 1855.4 400.0 C1856.0 400.0 1856.0 400.9 1856.5 400.9" fill="none" stroke="#ee7070" stroke-width="0.5" opacity="0.8"/><path d="M1513 402.8 L1516.0 403.0 L1519.0 403.2 L1522.0 403.3 L1525.0 403.6 L1528.0 403.2 L1531.0 403.6 L1534.0 402.0 L1537.0 402.7 L1540.0 403.6 L1543.0 403.1 L1546.0 403.5 L1549.0 402.1 L1552.0 402.7 L1555.0 402.3 L1558.0 402.9 L1561.0 402.9 L1564.0 401.9 L1567.0 402.3 L1570.0 402.4 L1573.0 403.5 L1576.0 403.3 L1579.0 402.2 L1582.0 403.3 L1585.0 402.1 L1588.0 403.0 L1591.0 402.1 L1594.0 401.9 L1597.0 403.5 L1600.0 402.3 L1603.0 402.3 L1606.0 403.7 L1609.0 403.5 L1612.0 402.4 L1615.0 403.6 L1618.0 402.9 L1621.0 403.1 L1624.0 402.3 L1627.0 403.6 L1630.0 403.1 L1633.0 403.6 L1636.0 403.5 L1639.0 402.4 L1642.0 402.6 L1645.0 402.2 L1648.0 402.2 L1651.0 402.0 L1654.0 402.4 L1657.0 403.0 L1660.0 401.9 L1663.0 403.1 L1666.0 402.5 L1669.0 402.5 L1672.0 403.4 L1675.0 402.8 L1678.0 402.5 L1681.0 402.8 L1684.0 403.2 L1687.0 402.0 L1690.0 403.7 L1693.0 401.9 L1696.0 403.2 L1699.0 403.4 L1702.0 401.9 L1705.0 403.3 L1708.0 402.6 L1711.0 402.9 L1714.0 401.9 L1717.0 402.0 L1720.0 402.2 L1723.0 403.6 L1726.0 402.3 L1729.0 403.3 L1732.0 403.6 L1735.0 403.6 L1738.0 402.5 L1741.0 402.5 L1744.0 402.8 L1747.0 403.3 L1750.0 402.1 L1753.0 403.2 L1756.0 403.3 L1759.0 403.4 L1762.0 402.0 L1765.0 403.6 L1768.0 402.1 L1771.0 402.5 L1774.0 403.0 L1777.0 403.6 L1780.0 402.5 L1783.0 403.6 L1786.0 402.9 L1789.0 402.5 L1792.0 402.5 L1795.0 402.2 L1798.0 402.0 L1801.0 402.2 L1804.0 403.1 L1807.0 403.7 L1810.0 402.2 L1813.0 402.0 L1816.0 403.7 L1819.0 402.9 L1822.0 402.6 L1825.0 402.3 L1828.0 403.0 L1831.0 403.4 L1834.0 402.7 L1837.0 402.7 L1840.0 402.0 L1843.0 403.5 L1846.0 402.0 L1849.0 402.8 L1852.0 403.4 L1855.0 402.1 L1858.0 403.2" fill="none" stroke="#e45050" stroke-width="1.3" opacity="0.85"/><rect x="1512" y="416.2" width="5.8" height="3.2" fill="#f08a2a"/><text x="1519.2" y="419.2" font-family="Liberation Sans, sans-serif" font-size="3.0" font-weight="700" fill="#777">CPU1 26.0%</text><rect x="1599" y="416.2" width="5.8" height="3.2" fill="#c8203c"/><text x="1606.2" y="419.2" font-family="Liberation Sans, sans-serif" font-size="3.0" font-weight="700" fill="#777">CPU2 31.0%</text><rect x="1685.7" y="416.2" width="5.8" height="3.2" fill="#5cb04a"/><text x="1692.9" y="419.2" font-family="Liberation Sans, sans-serif" font-size="3.0" font-weight="700" fill="#777">CPU3 20.0%</text><rect x="1772" y="416.2" width="5.8" height="3.2" fill="#3f86c8"/><text x="1779.2" y="419.2" font-family="Liberation Sans, sans-serif" font-size="3.0" font-weight="700" fill="#777">CPU4 14.7%</text><rect x="1512" y="422" width="5.8" height="3.2" fill="#e62020"/><text x="1519.2" y="425" font-family="Liberation Sans, sans-serif" font-size="3.0" font-weight="700" fill="#777">CPU5 33.0%</text><rect x="1599" y="422" width="5.8" height="3.2" fill="#e62020"/><text x="1606.2" y="425" font-family="Liberation Sans, sans-serif" font-size="3.0" font-weight="700" fill="#777">CPU6 27.3%</text><rect x="1685.7" y="422" width="5.8" height="3.2" fill="#e62020"/><text x="1692.9" y="425" font-family="Liberation Sans, sans-serif" font-size="3.0" font-weight="700" fill="#777">CPU7 14.0%</text><rect x="1772" y="422" width="5.8" height="3.2" fill="#e62020"/><text x="1779.2" y="425" font-family="Liberation Sans, sans-serif" font-size="3.0" font-weight="700" fill="#777">CPU8 14.7%</text><rect x="1512" y="428" width="5.8" height="3.2" fill="#e62020"/><text x="1519.2" y="431" font-family="Liberation Sans, sans-serif" font-size="3.0" font-weight="700" fill="#777">CPU9 14.9%</text><rect x="1599" y="428" width="5.8" height="3.2" fill="#e62020"/><text x="1606.2" y="431" font-family="Liberation Sans, sans-serif" font-size="3.0" font-weight="700" fill="#777">CPU10 14.7%</text><rect x="1685.7" y="428" width="5.8" height="3.2" fill="#e62020"/><text x="1692.9" y="431" font-family="Liberation Sans, sans-serif" font-size="3.0" font-weight="700" fill="#777">CPU11 15.3%</text><rect x="1772" y="428" width="5.8" height="3.2" fill="#e62020"/><text x="1779.2" y="431" font-family="Liberation Sans, sans-serif" font-size="3.0" font-weight="700" fill="#777">CPU12 14.0%</text><path d="M1511.6 491.3 H1856.5" stroke="#e9a0b4" stroke-width="0.6"/><path d="M1511.6 498.3 H1856.5" stroke="#9ccf8a" stroke-width="0.6"/><path d="M1514.6 510.4 l1.4 -4 l0.9 0.4 l-1.2 4 z" fill="#b0205a"/><text x="1519.2" y="507.8" font-family="Liberation Sans, sans-serif" font-size="3.0" font-weight="700" fill="#777">Memory</text><text x="1519.2" y="513.8" font-family="Liberation Sans, sans-serif" font-size="3.0" font-weight="700" fill="#777">934.7 MiB (3.1 %) of 7.7 GiB</text><circle cx="1697.8" cy="509.8" r="0.9" fill="#5cb04a"/><text x="1702.5" y="507.8" font-family="Liberation Sans, sans-serif" font-size="3.0" font-weight="700" fill="#777">Swap</text><text x="1702.5" y="513.8" font-family="Liberation Sans, sans-serif" font-size="3.0" font-weight="700" fill="#777">not available</text><path d="M1511.6 581.2 H1856.5" stroke="#a9cbe6" stroke-width="0.6"/><path d="M1513.4 593 h4.6 l-0.8 -2.8 h-3 z" fill="#3f7fc0"/><text x="1521.5" y="591.8" font-family="Liberation Sans, sans-serif" font-size="3.0" font-weight="700" fill="#777">Receiving</text><text x="1666.5" y="591.8" font-family="Liberation Sans, sans-serif" font-size="3.0" font-weight="700" fill="#777">0 bytes/s</text><path d="M1690.4 593 h4 l-2 -3.4 z" fill="#e03020"/><text x="1698" y="591.8" font-family="Liberation Sans, sans-serif" font-size="3.0" font-weight="700" fill="#777">Sent</text><text x="1838" y="591.8" font-family="Liberation Sans, sans-serif" font-size="3.0" font-weight="700" fill="#777">0 bytes/s</text><rect x="1857.2" y="333.8" width="3" height="260" fill="#e3ecf6"/><rect x="1857.4" y="452" width="2.6" height="8" fill="#c9d9ee"/><rect x="1485.2" y="594.4" width="372" height="2.6" fill="#dde8f5"/><rect x="1485.2" y="597" width="375" height="0.8" fill="#c9d6e6"/><rect x="1667" y="594.6" width="2" height="2.2" fill="#bcd0ea"/></svg>
<div class="panel" style="left:348px;top:644px;width:739px;height:400px"><div class="ph" style="height:56px;top:0;left:0;right:0"></div><div class="band" style="top:56px;height:4px;left:0;right:0"></div><div class="a" style="left:0;right:0;top:60px;height:45px;background:#f5f5f5;border-bottom:1px solid #bcbcbc"></div><div class="a" style="left:239px;top:60px;width:1px;height:45px;background:#bcbcbc"></div><div class="a" style="left:479px;top:60px;width:1px;height:45px;background:#bcbcbc"></div></div>
<div class="a" style="left:349px;top:751px;width:718px;height:43px;background:#fff;border-bottom:1px solid #e6e6e6"></div>
<div class="a" style="left:349px;top:794px;width:718px;height:43px;background:#fafafa;border-bottom:1px solid #e6e6e6"></div>
<div class="a" style="left:349px;top:837px;width:718px;height:43px;background:#fff;border-bottom:1px solid #e6e6e6"></div>
<div class="a" style="left:349px;top:880px;width:718px;height:43px;background:#fafafa;border-bottom:1px solid #e6e6e6"></div>
<div class="a" style="left:349px;top:923px;width:718px;height:43px;background:#fff;border-bottom:1px solid #e6e6e6"></div>
<div class="a" style="left:588px;top:750px;width:1px;height:215px;background:#e4e4e4"></div>
<div class="a" style="left:828px;top:750px;width:1px;height:215px;background:#e4e4e4"></div>
<div class="a" style="left:1067px;top:750px;width:1px;height:215px;background:#e4e4e4"></div>
<div class="a" style="left:1068px;top:750px;width:18px;height:215px;background:#f1f1f1"></div>
<div class="a" style="left:1071.6px;top:767.4px;width:12.8px;height:49.2px;background:#c1c1c1"></div>
<svg class="a" style="left:348px;top:644px" width="739" height="130" viewBox="348 644 739 130"><rect x="369" y="658" width="38" height="5.6" fill="#636361"/><path d="M372.6 663.6 V680.6 Q372.6 682.6 374.6 682.6 H401.4 Q403.4 682.6 403.4 680.6 V663.6" fill="none" stroke="#636361" stroke-width="2"/><path d="M379.2 667.9 H389 M379.2 672.5 H397.8 M379.2 677 H394.2" stroke="#636361" stroke-width="1.9"/><path d="M388 682.6 V686" stroke="#636361" stroke-width="1.5"/><circle cx="388" cy="688.3" r="2.3" fill="none" stroke="#636361" stroke-width="1.4"/><path d="M1070.07 664.74 L1072.90 665.13 L1072.90 668.07 L1070.07 668.46 L1069.20 670.57 L1070.92 672.84 L1068.84 674.92 L1066.57 673.20 L1064.46 674.07 L1064.07 676.90 L1061.13 676.90 L1060.74 674.07 L1058.63 673.20 L1056.36 674.92 L1054.28 672.84 L1056.00 670.57 L1055.13 668.46 L1052.30 668.07 L1052.30 665.13 L1055.13 664.74 L1056.00 662.63 L1054.28 660.36 L1056.36 658.28 L1058.63 660.00 L1060.74 659.13 L1061.13 656.30 L1064.07 656.30 L1064.46 659.13 L1066.57 660.00 L1068.84 658.28 L1070.92 660.36 L1069.20 662.63 Z" fill="none" stroke="#3a3a3a" stroke-width="1.5" stroke-linejoin="round"/><circle cx="1062.6" cy="666.6" r="3.7" fill="none" stroke="#3a3a3a" stroke-width="1.5"/><path d="M1074.5 761.1999999999999 H1081.5 L1078 757.4 Z" fill="#a3a3a3"/></svg>
<span class="t" style="left:362.40px;top:765px;font-size:17.5px;font-weight:400;letter-spacing:-0.350px;color:#333">CPU1 Temp</span><span class="t" style="left:679.20px;top:766px;font-size:17.5px;font-weight:400;letter-spacing:0.320px;color:#6cbd45">Normal</span><span class="t" style="left:1012.40px;top:765px;font-size:17.5px;font-weight:400;letter-spacing:-0.800px;color:#3a3a3a">43</span><span class="t" style="left:1037.40px;top:765px;font-size:17.5px;font-weight:400;letter-spacing:0.000px;color:#3a3a3a;transform:scaleX(0.8526);transform-origin:0 0">°C</span><span class="t" style="left:361.40px;top:808px;font-size:17.5px;font-weight:400;letter-spacing:-0.143px;color:#333">PCH Temp</span><span class="t" style="left:679.20px;top:809px;font-size:17.5px;font-weight:400;letter-spacing:0.320px;color:#6cbd45">Normal</span><span class="t" style="left:1012.40px;top:808px;font-size:17.5px;font-weight:400;letter-spacing:-0.800px;color:#3a3a3a">62</span><span class="t" style="left:1037.40px;top:808px;font-size:17.5px;font-weight:400;letter-spacing:0.000px;color:#3a3a3a;transform:scaleX(0.8526);transform-origin:0 0">°C</span><span class="t" style="left:362.40px;top:851px;font-size:17.5px;font-weight:400;letter-spacing:0.120px;color:#333">System Temp</span><span class="t" style="left:679.20px;top:852px;font-size:17.5px;font-weight:400;letter-spacing:0.320px;color:#6cbd45">Normal</span><span class="t" style="left:1012.40px;top:851px;font-size:17.5px;font-weight:400;letter-spacing:-0.800px;color:#3a3a3a">38</span><span class="t" style="left:1037.40px;top:851px;font-size:17.5px;font-weight:400;letter-spacing:0.000px;color:#3a3a3a;transform:scaleX(0.8526);transform-origin:0 0">°C</span><span class="t" style="left:361.40px;top:894px;font-size:17.5px;font-weight:400;letter-spacing:0.086px;color:#333">Peripheral Temp</span><span class="t" style="left:679.20px;top:895px;font-size:17.5px;font-weight:400;letter-spacing:0.320px;color:#6cbd45">Normal</span><span class="t" style="left:1012.40px;top:894px;font-size:17.5px;font-weight:400;letter-spacing:-0.800px;color:#3a3a3a">62</span><span class="t" style="left:1037.40px;top:894px;font-size:17.5px;font-weight:400;letter-spacing:0.000px;color:#3a3a3a;transform:scaleX(0.8526);transform-origin:0 0">°C</span><span class="t" style="left:362.40px;top:937px;font-size:17.5px;font-weight:400;letter-spacing:-0.067px;color:#333">Vcpu1VRM Temp</span><span class="t" style="left:679.20px;top:938px;font-size:17.5px;font-weight:400;letter-spacing:0.320px;color:#6cbd45">Normal</span><span class="t" style="left:1012.40px;top:937px;font-size:17.5px;font-weight:400;letter-spacing:-0.800px;color:#3a3a3a">41</span><span class="t" style="left:1037.40px;top:937px;font-size:17.5px;font-weight:400;letter-spacing:0.000px;color:#3a3a3a;transform:scaleX(0.8526);transform-origin:0 0">°C</span>
<div class="panel" style="left:1100px;top:644px;width:738px;height:400px"><div class="ph" style="height:56px;top:0;left:0;right:0"></div><div class="band" style="top:56px;height:6px;left:0;right:0"></div></div>
<svg class="a" style="left:1100px;top:644px" width="738" height="340" viewBox="1100 644 738 340"><path d="M1121.2 656.2 V690.2 H1158" fill="none" stroke="#7b7b79" stroke-width="2.3" stroke-linejoin="round"/><path d="M1123 662.1 H1155 M1123 668.5 H1155 M1123 674.4 H1155 M1123 680.3 H1155" stroke="#cfcfcf" stroke-width="0.9"/><path d="M1124 686.2 L1128.2 674.6 L1130.7 678.7 L1132.3 680 L1136.6 668.5 L1139.4 674.6 L1144.6 671.3 L1146.4 672.6 L1149.4 680.5 L1154.3 674.4 V686.2 Z" fill="#636361"/><path d="M1774.81 669.92 A9.3 9.3 0 1 1 1780.52 675.94" fill="none" stroke="#3a3a3a" stroke-width="2.2"/><path d="M1772.6 674.7 L1778.3 670 L1777.9 674.7 Z" fill="#3a3a3a"/><path d="M1785.9 661.2 L1785.3 667 L1788.4 670.3 L1781.4 668.2 Z" fill="#2b2b2b"/><path d="M1821.37 664.94 L1824.20 665.33 L1824.20 668.27 L1821.37 668.66 L1820.50 670.77 L1822.22 673.04 L1820.14 675.12 L1817.87 673.40 L1815.76 674.27 L1815.37 677.10 L1812.43 677.10 L1812.04 674.27 L1809.93 673.40 L1807.66 675.12 L1805.58 673.04 L1807.30 670.77 L1806.43 668.66 L1803.60 668.27 L1803.60 665.33 L1806.43 664.94 L1807.30 662.83 L1805.58 660.56 L1807.66 658.48 L1809.93 660.20 L1812.04 659.33 L1812.43 656.50 L1815.37 656.50 L1815.76 659.33 L1817.87 660.20 L1820.14 658.48 L1822.22 660.56 L1820.50 662.83 Z" fill="none" stroke="#3a3a3a" stroke-width="1.5" stroke-linejoin="round"/><circle cx="1813.9" cy="666.8" r="3.7" fill="none" stroke="#3a3a3a" stroke-width="1.5"/><path d="M1175 759.8 H1818.8" stroke="#dcdcdc" stroke-width="1.2"/><path d="M1175 795.9 H1818.8" stroke="#dcdcdc" stroke-width="1.2"/><path d="M1175 831.9 H1818.8" stroke="#dcdcdc" stroke-width="1.2"/><path d="M1175 868.0 H1818.8" stroke="#dcdcdc" stroke-width="1.2"/><path d="M1175 904.0 H1818.8" stroke="#dcdcdc" stroke-width="1.2"/><path d="M1174.7 851.0 L1205.4 848.9 L1236.0 848.9 L1266.7 848.9 L1297.3 848.9 L1328.0 848.9 L1358.6 848.9 L1389.2 848.9 L1419.9 848.9 L1450.5 848.9 L1481.2 848.9 L1511.8 851.0 L1542.5 848.9 L1573.2 851.0 L1603.8 851.0 L1634.5 848.9 L1665.1 848.9 L1695.8 848.9 L1726.4 848.9 L1757.1 851.0 L1787.7 848.9 L1818.3 848.9 L1818.3 940.1 L1174.7 940.1 Z" fill="#a8bd3c"/><path d="M1174.7 851.0 L1205.4 848.9 L1236.0 848.9 L1266.7 848.9 L1297.3 848.9 L1328.0 848.9 L1358.6 848.9 L1389.2 848.9 L1419.9 848.9 L1450.5 848.9 L1481.2 848.9 L1511.8 851.0 L1542.5 848.9 L1573.2 851.0 L1603.8 851.0 L1634.5 848.9 L1665.1 848.9 L1695.8 848.9 L1726.4 848.9 L1757.1 851.0 L1787.7 848.9 L1818.3 848.9" fill="none" stroke="#6a8516" stroke-width="1.1"/><path d="M1175 868.9 H1818.8 M1175 905 H1818.8" stroke="#a2b738" stroke-width="1"/><circle cx="1389.2" cy="848.6" r="7.2" fill="#93b00e" stroke="#5c750a" stroke-width="1.3"/><path d="M1174.7 759 V941.2 M1173.7 940.3 H1819.3" stroke="#000" stroke-width="2" fill="none"/><path d="M1174.7 940 V946 M1205.4 940 V946 M1236.0 940 V946 M1266.7 940 V946 M1297.3 940 V946 M1328.0 940 V946 M1358.6 940 V946 M1389.2 940 V946 M1419.9 940 V946 M1450.5 940 V946 M1481.2 940 V946 M1511.8 940 V946 M1542.5 940 V946 M1573.2 940 V946 M1603.8 940 V946 M1634.5 940 V946 M1665.1 940 V946 M1695.8 940 V946 M1726.4 940 V946 M1757.1 940 V946 M1787.7 940 V946 M1818.3 940 V946 M1168.6 759.8 H1175 M1168.6 795.9 H1175 M1168.6 831.9 H1175 M1168.6 868.0 H1175 M1168.6 904.0 H1175 M1168.6 940.1 H1175" stroke="#000" stroke-width="1.6"/><text transform="translate(1141 854.3) rotate(-90)" text-anchor="middle" font-family="Liberation Sans, sans-serif" font-size="20" fill="#333" textLength="151.5" lengthAdjust="spacing">Temperature (°C)</text></svg>
<div class="a" style="left:1101px;top:645px;width:727px;height:320px;overflow:hidden"><div class="a" style="left:-1101px;top:-645px;width:1918px;height:976px"><span class="t" style="left:1148.50px;top:751px;font-size:17px;font-weight:400;letter-spacing:0.000px;color:#444;transform:scaleX(0.9211);transform-origin:0 0">85</span><span class="t" style="left:1148.50px;top:787px;font-size:17px;font-weight:400;letter-spacing:0.000px;color:#444;transform:scaleX(0.9211);transform-origin:0 0">68</span><span class="t" style="left:1148.50px;top:823px;font-size:17px;font-weight:400;letter-spacing:0.000px;color:#444;transform:scaleX(0.9211);transform-origin:0 0">51</span><span class="t" style="left:1148.50px;top:859px;font-size:17px;font-weight:400;letter-spacing:0.000px;color:#444;transform:scaleX(0.9211);transform-origin:0 0">34</span><span class="t" style="left:1147.53px;top:895px;font-size:17px;font-weight:400;letter-spacing:0.000px;color:#444;transform:scaleX(0.9722);transform-origin:0 0">17</span><span class="t" style="left:1157.60px;top:931px;font-size:17px;font-weight:400;letter-spacing:0.000px;color:#444;transform:scaleX(0.9333);transform-origin:0 0">0</span><span class="t" style="left:1142.75px;top:953px;font-size:17px;font-weight:400;letter-spacing:0.000px;color:#444;transform:scaleX(0.9538);transform-origin:0 0">15:18:20</span><span class="t" style="left:1234.70px;top:953px;font-size:17px;font-weight:400;letter-spacing:0.000px;color:#444;transform:scaleX(0.9538);transform-origin:0 0">15:18:50</span><span class="t" style="left:1326.65px;top:953px;font-size:17px;font-weight:400;letter-spacing:0.000px;color:#444;transform:scaleX(0.9538);transform-origin:0 0">15:19:20</span><span class="t" style="left:1418.60px;top:953px;font-size:17px;font-weight:400;letter-spacing:0.000px;color:#444;transform:scaleX(0.9538);transform-origin:0 0">15:19:50</span><span class="t" style="left:1510.55px;top:953px;font-size:17px;font-weight:400;letter-spacing:0.000px;color:#444;transform:scaleX(0.9538);transform-origin:0 0">15:20:20</span><span class="t" style="left:1602.50px;top:953px;font-size:17px;font-weight:400;letter-spacing:0.000px;color:#444;transform:scaleX(0.9538);transform-origin:0 0">15:20:50</span><span class="t" style="left:1694.45px;top:953px;font-size:17px;font-weight:400;letter-spacing:0.000px;color:#444;transform:scaleX(0.9538);transform-origin:0 0">15:21:20</span><span class="t" style="left:1786.40px;top:953px;font-size:17px;font-weight:400;letter-spacing:0.000px;color:#444;transform:scaleX(0.9538);transform-origin:0 0">15:21:50</span></div></div>
</div></div>
<div class="a" style="left:1902px;top:191px;width:16px;height:766px;background:#f1f1f1"></div><div class="a" style="left:1904px;top:201px;width:13px;height:597px;background:#c1c1c1"></div>
<svg class="a" style="left:1902px;top:191px" width="16" height="766" viewBox="1902 191 16 766"><path d="M1906.8000000000002 195.2 H1914.0 L1910.4 191.2 Z" fill="#a3a3a3"/><path d="M1906.8000000000002 945.6 H1914.0 L1910.4 949.6 Z" fill="#505050"/></svg>
<div class="a" style="left:1405px;top:175px;width:189px;height:152px;background:#fff;border:4px solid #ec1c24;border-radius:3px;z-index:20;box-shadow:0 1px 5px rgba(0,0,0,.3)"><div class="a" style="left:0;right:0;top:89px;height:35px;background:#f9e793"></div></div>
<svg class="a" style="left:1425px;top:244px;z-index:30" width="20" height="18" viewBox="1425 244 20 18"><path d="M1429.2 253.4 L1433 257.6 L1439.8 248.2" fill="none" stroke="#4a4644" stroke-width="1.7"/></svg>
<div class="a" style="left:0;top:957px;width:1918px;height:15px;background:#fafafa;z-index:40"></div>
<div class="a" style="left:0;top:972px;width:1918px;height:4px;background:#000;z-index:40"></div><div class="a" style="left:390px;top:972px;width:48px;height:4px;background:#3a3a3a;z-index:41"></div>
<div class="a" style="left:-1px;top:950px;width:638px;height:22px;background:#f2f2f2;border:1px solid #cfcfcf;border-radius:0 4px 0 0;z-index:45"></div>
<span class="t" style="left:1750.00px;top:17px;font-size:12px;font-weight:700;letter-spacing:-0.500px;color:#3a3000">99+</span><span class="t" style="left:1802.10px;top:32px;font-size:15.5px;font-weight:700;letter-spacing:-0.950px;color:#fff">admin</span><span class="t" style="left:74.40px;top:151px;font-size:18.6px;font-weight:400;letter-spacing:0.050px;color:#0a0a0a">Dashboard</span><span class="t" style="left:74.80px;top:207px;font-size:18.6px;font-weight:400;letter-spacing:0.143px;color:#0a0a0a">IPMI KVM</span><span class="t" style="left:74.40px;top:263px;font-size:18.6px;font-weight:400;letter-spacing:-0.067px;color:#0a0a0a">Device Discovery</span><span class="t" style="left:74.40px;top:319px;font-size:18.6px;font-weight:400;letter-spacing:0.113px;color:#0a0a0a">Device Management</span><span class="t" style="left:79.80px;top:377px;font-size:18.6px;font-weight:400;letter-spacing:-0.020px;color:#0a0a0a">All Devices</span><span class="t" style="left:78.80px;top:434px;font-size:18.6px;font-weight:400;letter-spacing:0.333px;color:#0a0a0a">Network Topology</span><span class="t" style="left:75.40px;top:491px;font-size:18.6px;font-weight:400;letter-spacing:0.274px;color:#0a0a0a">Alerts Configuration</span><span class="t" style="left:74.40px;top:547px;font-size:18.6px;font-weight:400;letter-spacing:0.333px;color:#0a0a0a">Logs</span><span class="t" style="left:74.40px;top:603px;font-size:18.6px;font-weight:400;letter-spacing:0.486px;color:#0a0a0a">Settings</span><span class="t" style="left:326.40px;top:96px;font-size:18.6px;font-weight:400;letter-spacing:0.050px;color:#2a2a2a">Dashboard</span><span class="t" style="left:515.00px;top:96px;font-size:18.6px;font-weight:400;letter-spacing:0.117px;color:#2a2a2a">192.168.0.100</span><span class="t" style="left:703.70px;top:96px;font-size:18.6px;font-weight:400;letter-spacing:0.083px;color:#2a2a2a">KVM Dashboard</span><span class="t" style="left:892.50px;top:96px;font-size:18.6px;font-weight:400;letter-spacing:0.040px;color:#2a2a2a">KVM Manager</span><span class="t" style="left:1081.20px;top:96px;font-size:18.6px;font-weight:400;letter-spacing:0.217px;color:#2a2a2a">192.168.0.112</span><span class="t" style="left:354.00px;top:153px;font-size:18px;font-weight:700;letter-spacing:-0.125px;color:#222">Device Management</span><span class="t" style="left:530.50px;top:153px;font-size:18px;font-weight:400;letter-spacing:0.495px;color:#333">(192.168.0.112) / Show</span><span class="t" style="left:805.80px;top:154px;font-size:15px;font-weight:400;letter-spacing:0.050px;color:#222">Dashboard</span><span class="t" style="left:1264.10px;top:155px;font-size:15px;font-weight:400;letter-spacing:0.350px;color:#222">Tools</span><span class="t" style="left:1455.30px;top:155px;font-size:15px;font-weight:400;letter-spacing:0.125px;color:#222">2 columns</span><span class="t" style="left:1457.40px;top:211px;font-size:16px;font-weight:400;letter-spacing:0.486px;color:#333;z-index:30">1 column</span><span class="t" style="left:1458.40px;top:246px;font-size:16px;font-weight:400;letter-spacing:0.300px;color:#333;z-index:30">2 columns</span><span class="t" style="left:1458.40px;top:281px;font-size:16px;font-weight:400;letter-spacing:0.300px;color:#333;z-index:30">3 columns</span><span class="t" style="left:367.30px;top:216px;font-size:20px;font-weight:400;letter-spacing:-0.077px;color:#111">Device Summary</span><span class="t" style="left:560.60px;top:293px;font-size:16px;font-weight:700;letter-spacing:-0.341px;color:#444">Device Information</span><span class="t" style="left:1060.80px;top:293px;font-size:16px;font-weight:700;letter-spacing:-0.311px;color:#444">Network Information</span><span class="t" style="left:1479.00px;top:293px;font-size:16px;font-weight:700;letter-spacing:-0.875px;color:#444">Remote Screenshot</span><span class="t" style="left:559.86px;top:328px;font-size:17px;font-weight:400;letter-spacing:0.000px;color:#8a8a8a;transform:scaleX(0.9439);transform-origin:0 0">Managed By:</span><span class="t" style="left:753.80px;top:328px;font-size:17.5px;font-weight:700;letter-spacing:0.125px;color:#444">IPMI v2.0</span><span class="t" style="left:559.83px;top:353px;font-size:17px;font-weight:400;letter-spacing:0.000px;color:#8a8a8a;transform:scaleX(0.9744);transform-origin:0 0">Mfg. Name:</span><span class="t" style="left:754.80px;top:353px;font-size:17.5px;font-weight:700;letter-spacing:-0.733px;color:#444">Supermicro</span><span class="t" style="left:559.85px;top:378px;font-size:17px;font-weight:400;letter-spacing:0.000px;color:#8a8a8a;transform:scaleX(0.9534);transform-origin:0 0">Mfg. ID:</span><span class="t" style="left:753.80px;top:378px;font-size:17.5px;font-weight:700;letter-spacing:0.350px;color:#444">10876</span><span class="t" style="left:559.85px;top:401px;font-size:17px;font-weight:400;letter-spacing:0.000px;color:#8a8a8a;transform:scaleX(0.9540);transform-origin:0 0">Device Tag:</span><span class="t" style="left:756.00px;top:401px;font-size:17.5px;font-weight:700;letter-spacing:-0.650px;color:#444">US 2F</span><span class="t" style="left:559.84px;top:425px;font-size:17px;font-weight:400;letter-spacing:0.000px;color:#8a8a8a;transform:scaleX(0.9590);transform-origin:0 0">Firmware Revision:</span><span class="t" style="left:754.80px;top:425px;font-size:17.5px;font-weight:700;letter-spacing:-0.133px;color:#444">2.36</span><span class="t" style="left:559.85px;top:450px;font-size:17px;font-weight:400;letter-spacing:0.000px;color:#8a8a8a;transform:scaleX(0.9464);transform-origin:0 0">Device Revision:</span><span class="t" style="left:753.80px;top:450px;font-size:17.5px;font-weight:700;letter-spacing:0.000px;color:#444">1</span><span class="t" style="left:559.89px;top:475px;font-size:17px;font-weight:400;letter-spacing:0.000px;color:#8a8a8a;transform:scaleX(0.9117);transform-origin:0 0">Device ID:</span><span class="t" style="left:754.80px;top:475px;font-size:17.5px;font-weight:700;letter-spacing:-0.400px;color:#444">32</span><span class="t" style="left:559.84px;top:500px;font-size:17px;font-weight:400;letter-spacing:0.000px;color:#8a8a8a;transform:scaleX(0.9614);transform-origin:0 0">Product ID:</span><span class="t" style="left:754.80px;top:500px;font-size:17.5px;font-weight:700;letter-spacing:0.117px;color:#444">2144 (0x0860)</span><span class="t" style="left:559.84px;top:525px;font-size:17px;font-weight:400;letter-spacing:0.000px;color:#8a8a8a;transform:scaleX(0.9638);transform-origin:0 0">Device Available:</span><span class="t" style="left:754.80px;top:525px;font-size:17.5px;font-weight:700;letter-spacing:-1.900px;color:#444">yes</span><span class="t" style="left:1060.04px;top:328px;font-size:17px;font-weight:400;letter-spacing:0.000px;color:#8a8a8a;transform:scaleX(0.9601);transform-origin:0 0">IP Address Source:</span><span class="t" style="left:1253.70px;top:328px;font-size:17.5px;font-weight:700;letter-spacing:-0.745px;color:#444">DHCP Address</span><span class="t" style="left:1060.03px;top:353px;font-size:17px;font-weight:400;letter-spacing:0.000px;color:#8a8a8a;transform:scaleX(0.9682);transform-origin:0 0">IP Address:</span><span class="t" style="left:1253.70px;top:353px;font-size:17.5px;font-weight:700;letter-spacing:0.400px;color:#444">192.168.0.112</span><span class="t" style="left:1061.00px;top:378px;font-size:17px;font-weight:400;letter-spacing:0.000px;color:#8a8a8a;transform:scaleX(0.9650);transform-origin:0 0">Subnet Mask:</span><span class="t" style="left:1254.70px;top:378px;font-size:17.5px;font-weight:700;letter-spacing:0.233px;color:#444">255.255.255.0</span><span class="t" style="left:1060.04px;top:403px;font-size:17px;font-weight:400;letter-spacing:0.000px;color:#8a8a8a;transform:scaleX(0.9589);transform-origin:0 0">MAC Address:</span><span class="t" style="left:1254.70px;top:403px;font-size:17.5px;font-weight:700;letter-spacing:-0.488px;color:#444">0c:c4:7a:c1:dc:1e</span><span class="t" style="left:1061.00px;top:428px;font-size:17px;font-weight:400;letter-spacing:0.000px;color:#8a8a8a;transform:scaleX(0.9611);transform-origin:0 0">SNMP Community String:</span><span class="t" style="left:1253.70px;top:428px;font-size:17.5px;font-weight:700;letter-spacing:-0.640px;color:#444">public</span><span class="t" style="left:371.60px;top:481px;font-size:16px;font-weight:700;letter-spacing:-0.482px;color:#0b8a1f">Host is powered on</span><span class="t" style="left:414.80px;top:346px;font-size:35px;font-weight:700;letter-spacing:2.733px;color:#a3007c;-webkit-text-stroke:0.9px #a3007c">IPMI</span><span class="t" style="left:419.60px;top:664px;font-size:20px;font-weight:400;letter-spacing:0.157px;color:#111">IPMI Monitor (All Parameters) 192.168.0.112</span><span class="t" style="left:361.60px;top:719px;font-size:18px;font-weight:700;letter-spacing:0.080px;color:#555">Metric Name</span><span class="t" style="left:681.20px;top:719px;font-size:18px;font-weight:700;letter-spacing:-0.080px;color:#555">Status</span><span class="t" style="left:993.20px;top:719px;font-size:18px;font-weight:700;letter-spacing:-0.100px;color:#555">Value</span><span class="t" style="left:1171.00px;top:664px;font-size:20px;font-weight:400;letter-spacing:-0.082px;color:#111">IPMI Monitor (Single Parameter - Live) - CPU1 Temp</span><span class="t" style="left:1130.00px;top:715px;font-size:19.5px;font-weight:400;letter-spacing:0.417px;color:#222">192.168.0.112</span><span class="t" style="left:2.00px;top:956px;font-size:12px;font-weight:400;letter-spacing:0.308px;color:#555;z-index:50">172.17.30.30:8080/qrmplus/#</span>
</body></html>
